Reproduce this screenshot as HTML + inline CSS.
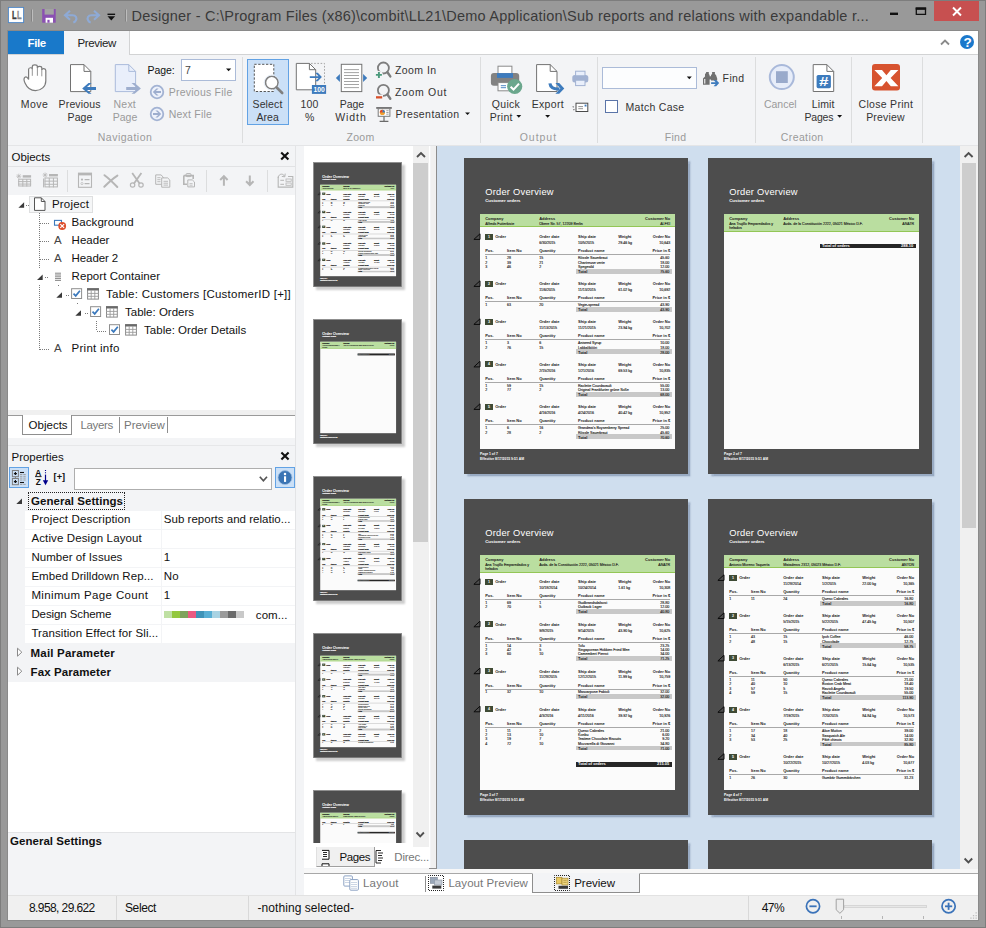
<!DOCTYPE html><html lang="en"><head><meta charset="utf-8"><title>Designer</title><style>
html,body{margin:0;padding:0}
body{width:986px;height:928px;overflow:hidden;position:relative;background:#999;font-family:"Liberation Sans",sans-serif}
body>div,body>svg,.t,#pv>div,#tv>div{position:absolute}
.t{white-space:pre;color:#1e1e1e;line-height:normal}
#pv>.pg{box-shadow:2.5px 2.5px 1.5px rgba(110,130,160,.55);overflow:visible}
.thb{width:89px;height:125px;overflow:hidden;background:#8f8f8f;box-shadow:2.5px 2.5px 2px rgba(0,0,0,.2)}
.thb .v,.thb .b{-webkit-text-stroke:.4px #222}
.thb .h1,.thb .h2,.thb .f{-webkit-text-stroke:.3px #fff}
svg{overflow:visible}

.pg{position:absolute;width:224px;height:316.6px;background:#4d4d4d;overflow:hidden}
.pg i,.pg b,.pg u,.pg s,.pg div,.pg svg{position:absolute;font-style:normal;text-decoration:none}
.pg i{white-space:pre;line-height:6px;height:6px;color:#1a1a1a}
.pg .b{font-weight:700;font-size:4px}
.pg .v{font-size:3.6px;-webkit-text-stroke:.12px #1a1a1a}
.pg .w{color:#fff}
.pg .f{font-weight:700;font-size:3.4px;color:#fff}
.pg .h1{font-size:9.3px;line-height:12px;height:12px;color:#fff;letter-spacing:.25px}
.pg .h2{font-weight:700;font-size:4.4px;color:#fff}
.pg .wp{left:16px;top:56.2px;width:195.2px;height:235px;background:#fbfbfb}
.pg .gb{left:16px;top:56.2px;width:195.2px;background:#badea0;border-bottom:1.3px solid #93c656}
.pg .bd{left:21.2px;width:7.6px;height:5.9px;background:#3f4b35;color:#fff;font-size:3.6px;line-height:6.4px;text-align:center}
.pg u{left:21.2px;width:185.2px;height:.6px;background:#a8a8a8}
.pg s{left:112px;width:96px;height:4.7px;background:#c8c8c8}
.pg s.k{background:#262626;height:4.4px}
.pg .tr{left:0;top:0}
.pg .tr path{fill:none;stroke:#0a0a0a;stroke-width:1}
</style></head><body><div style="left:0px;top:0px;width:986px;height:928px;background:#999;"></div><div style="left:0px;top:0px;width:986px;height:1px;background:#7d7d7d;"></div><div style="left:0px;top:0px;width:1px;height:928px;background:#7d7d7d;"></div><div style="left:985px;top:0px;width:1px;height:928px;background:#7d7d7d;"></div><div style="left:0px;top:927px;width:986px;height:1px;background:#7d7d7d;"></div><div style="left:7px;top:30px;width:1px;height:891px;background:#8a8a8a;"></div><div style="left:978px;top:30px;width:1px;height:891px;background:#8a8a8a;"></div><div style="left:7px;top:920px;width:972px;height:1px;background:#8a8a8a;"></div><div style="left:7px;top:30px;width:972px;height:1px;background:#8a8a8a;"></div><div style="left:934px;top:1px;width:45px;height:20px;background:#c75050;"></div><div style="left:8px;top:31px;width:970px;height:889px;background:#f3f4f6;"></div><div style="left:8px;top:31px;width:970px;height:23px;background:#fff;"></div><div style="left:8px;top:54px;width:970px;height:1px;background:#d2d3d4;"></div><div style="left:8px;top:31px;width:56px;height:23px;background:#1979ca;"></div><div style="left:64px;top:31px;width:66px;height:24px;background:#f3f4f6;border-right:1px solid #d2d3d4;box-sizing:border-box;"></div><div style="left:242px;top:57px;width:1px;height:86px;background:#dcddde;"></div><div style="left:480px;top:57px;width:1px;height:86px;background:#dcddde;"></div><div style="left:597px;top:57px;width:1px;height:86px;background:#dcddde;"></div><div style="left:755px;top:57px;width:1px;height:86px;background:#dcddde;"></div><div style="left:851px;top:57px;width:1px;height:86px;background:#dcddde;"></div><div style="left:922px;top:57px;width:1px;height:86px;background:#dcddde;"></div><div style="left:8px;top:145px;width:970px;height:1px;background:#e4e5e7;"></div><div style="left:181px;top:59px;width:55px;height:22px;background:#fff;border:1px solid #abbbd8;box-sizing:border-box;"></div><div style="left:247px;top:59px;width:42px;height:66px;background:#cbe0f7;border:1px solid #62a2e4;box-sizing:border-box;"></div><div style="left:602px;top:67px;width:95px;height:22px;background:#fcfdfe;border:1px solid #abbbd8;box-sizing:border-box;"></div><div style="left:605px;top:100px;width:13px;height:13px;background:#fff;border:1px solid #5a74a8;box-sizing:border-box;"></div><div style="left:295px;top:146px;width:1px;height:749px;background:#e3e4e6;"></div><div style="left:8px;top:166px;width:287px;height:1px;background:#e1e2e4;"></div><div style="left:8px;top:195px;width:287px;height:215px;background:#fff;"></div><div style="left:8px;top:410px;width:287px;height:5px;background:#f0f0f0;"></div><div style="left:8px;top:415px;width:287px;height:1px;background:#9a9a9a;"></div><div style="left:8px;top:416px;width:287px;height:22px;background:#fff;"></div><div style="left:22px;top:415px;width:50px;height:20px;background:#fff;border:1px solid #8e8e8e;border-top:none;box-sizing:border-box;"></div><div style="left:119px;top:417px;width:1px;height:16px;background:#8e8e8e;"></div><div style="left:167px;top:417px;width:1px;height:16px;background:#8e8e8e;"></div><div style="left:67px;top:170px;width:1px;height:22px;background:#dcddde;"></div><div style="left:206px;top:170px;width:1px;height:22px;background:#dcddde;"></div><div style="left:267px;top:170px;width:1px;height:22px;background:#dcddde;"></div><div style="left:29px;top:195.5px;width:63.5px;height:17px;background:#f5f6f7;border:1px solid #dedfe0;box-sizing:border-box;"></div><div style="left:8px;top:445px;width:287px;height:1px;background:#e6e7e9;"></div><div style="left:9px;top:467px;width:20px;height:21px;background:#cbe0f7;border:1px solid #62a2e4;box-sizing:border-box;"></div><div style="left:73.5px;top:468px;width:198px;height:21.5px;background:#fff;border:1px solid #aeaeae;box-sizing:border-box;"></div><div style="left:275px;top:467px;width:20px;height:21px;background:#cbe0f7;border:1px solid #62a2e4;box-sizing:border-box;"></div><div style="left:25px;top:511px;width:135.5px;height:18px;background:#fff;"></div><div style="left:161.5px;top:511px;width:133.5px;height:18px;background:#fff;"></div><div style="left:25px;top:530px;width:135.5px;height:18px;background:#fff;"></div><div style="left:161.5px;top:530px;width:133.5px;height:18px;background:#fff;"></div><div style="left:25px;top:549px;width:135.5px;height:18px;background:#fff;"></div><div style="left:161.5px;top:549px;width:133.5px;height:18px;background:#fff;"></div><div style="left:25px;top:568px;width:135.5px;height:18px;background:#fff;"></div><div style="left:161.5px;top:568px;width:133.5px;height:18px;background:#fff;"></div><div style="left:25px;top:586.6px;width:135.5px;height:18px;background:#fff;"></div><div style="left:161.5px;top:586.6px;width:133.5px;height:18px;background:#fff;"></div><div style="left:25px;top:605.6px;width:135.5px;height:18px;background:#fff;"></div><div style="left:161.5px;top:605.6px;width:133.5px;height:18px;background:#fff;"></div><div style="left:25px;top:624.6px;width:135.5px;height:18px;background:#fff;"></div><div style="left:161.5px;top:624.6px;width:133.5px;height:18px;background:#fff;"></div><div style="left:28px;top:492px;width:97px;height:17.5px;border:1px dotted #222;box-sizing:border-box;"></div><div style="left:163.5px;top:610.8px;width:8.03px;height:7.3px;background:#bfe0a3;"></div><div style="left:171.53px;top:610.8px;width:8.03px;height:7.3px;background:#93c83e;"></div><div style="left:179.56px;top:610.8px;width:8.03px;height:7.3px;background:#7fa35c;"></div><div style="left:187.59px;top:610.8px;width:8.03px;height:7.3px;background:#ea5a82;"></div><div style="left:195.62px;top:610.8px;width:8.03px;height:7.3px;background:#3f93b8;"></div><div style="left:203.65px;top:610.8px;width:8.03px;height:7.3px;background:#59afd4;"></div><div style="left:211.68px;top:610.8px;width:8.03px;height:7.3px;background:#a9d3e3;"></div><div style="left:219.70999999999998px;top:610.8px;width:8.03px;height:7.3px;background:#9b9b9b;"></div><div style="left:227.74px;top:610.8px;width:8.03px;height:7.3px;background:#6b6b6b;"></div><div style="left:235.76999999999998px;top:610.8px;width:8.03px;height:7.3px;background:#c9c9c9;"></div><div style="left:8px;top:682px;width:287px;height:150px;background:#fff;"></div><div style="left:8px;top:832px;width:287px;height:1px;background:#e3e4e6;"></div><div style="left:8px;top:895px;width:970px;height:25px;background:#f0f0f0;"></div><div style="left:8px;top:895px;width:970px;height:1px;background:#e2e2e2;"></div><div style="left:116px;top:896px;width:1px;height:24px;background:#d9d9d9;"></div><div style="left:248px;top:896px;width:1px;height:24px;background:#d9d9d9;"></div><div style="left:747.5px;top:896px;width:1px;height:24px;background:#d9d9d9;"></div><div style="left:304px;top:146px;width:126px;height:722px;background:#fff;"></div><div style="left:413px;top:146px;width:16px;height:701px;background:#f0f0f0;"></div><div style="left:413px;top:163px;width:15px;height:378.5px;background:#cdcdcd;"></div><div style="left:430.5px;top:146px;width:5px;height:722px;background:#f0f0f0;"></div><div style="left:436px;top:146px;width:1px;height:722px;background:#8c8c8c;"></div><div style="left:437px;top:146px;width:523px;height:722.5px;background:#cfdeee;"></div><div style="left:960px;top:146px;width:18px;height:722.5px;background:#f0f0f0;"></div><div style="left:961.5px;top:163.3px;width:14.2px;height:364.5px;background:#cdcdcd;"></div><div id="pv" style="left:437px;top:146px;width:523px;height:722.5px;overflow:hidden"><div class="pg" style="left:27px;top:11.699999999999989px"><i class="h1" style="left:21.2px;top:28.8px">Order Overview</i><i class="h2" style="left:21.2px;top:40.4px">Customer orders</i><div class="wp"></div><div class="gb" style="height:12.6px"></div><i class="b" style="left:21.2px;top:58.2px">Company</i><i class="b" style="left:75.2px;top:58.2px">Address</i><i class="b r" style="right:17.8px;top:58.2px">Customer No</i><i class="v" style="left:21.2px;top:62.9px">Alfreds Futterkiste</i><i class="v" style="left:75.2px;top:62.9px">Obere Str. 57, 12209 Berlin</i><i class="v r" style="right:17.8px;top:62.9px">ALFKI</i><b class="bd" style="left:21.2px;top:76.3px">1</b><i class="b" style="left:31.2px;top:76.6px">Order</i><i class="b" style="left:75.2px;top:76.6px">Order date</i><i class="b" style="left:114.0px;top:76.6px">Ship date</i><i class="b" style="left:154.2px;top:76.6px">Weight</i><i class="b r" style="right:17.8px;top:76.6px">Order No</i><i class="v" style="left:75.2px;top:82.5px">6/30/2015</i><i class="v" style="left:114.0px;top:82.5px">10/5/2015</i><i class="v" style="left:154.2px;top:82.5px">29.46 kg</i><i class="v r" style="right:17.8px;top:82.5px">10,643</i><i class="b" style="left:21.2px;top:90.6px">Pos.</i><i class="b" style="left:43.0px;top:90.6px">Item No</i><i class="b" style="left:75.2px;top:90.6px">Quantity</i><i class="b" style="left:114.0px;top:90.6px">Product name</i><i class="b r" style="right:17.8px;top:90.6px">Price in $</i><u style="top:96.7px"></u><i class="v" style="left:21.2px;top:97.5px">1</i><i class="v" style="left:43.0px;top:97.5px">28</i><i class="v" style="left:75.2px;top:97.5px">15</i><i class="v" style="left:114.0px;top:97.5px">Rössle Sauerkraut</i><i class="v r" style="right:18.8px;top:97.5px">45.60</i><i class="v" style="left:21.2px;top:102.0px">2</i><i class="v" style="left:43.0px;top:102.0px">39</i><i class="v" style="left:75.2px;top:102.0px">21</i><i class="v" style="left:114.0px;top:102.0px">Chartreuse verte</i><i class="v r" style="right:18.8px;top:102.0px">18.00</i><i class="v" style="left:21.2px;top:106.4px">3</i><i class="v" style="left:43.0px;top:106.4px">46</i><i class="v" style="left:75.2px;top:106.4px">2</i><i class="v" style="left:114.0px;top:106.4px">Spegesild</i><i class="v r" style="right:18.8px;top:106.4px">12.00</i><s style="top:111.2px"></s><i class="b" style="left:114.0px;top:111.4px">Total</i><i class="v r" style="right:18.8px;top:111.4px">75.60</i><b class="bd" style="left:21.2px;top:123.3px">2</b><i class="b" style="left:31.2px;top:123.6px">Order</i><i class="b" style="left:75.2px;top:123.6px">Order date</i><i class="b" style="left:114.0px;top:123.6px">Ship date</i><i class="b" style="left:154.2px;top:123.6px">Weight</i><i class="b r" style="right:17.8px;top:123.6px">Order No</i><i class="v" style="left:75.2px;top:129.5px">11/6/2015</i><i class="v" style="left:114.0px;top:129.5px">11/13/2015</i><i class="v" style="left:154.2px;top:129.5px">61.02 kg</i><i class="v r" style="right:17.8px;top:129.5px">10,692</i><i class="b" style="left:21.2px;top:137.6px">Pos.</i><i class="b" style="left:43.0px;top:137.6px">Item No</i><i class="b" style="left:75.2px;top:137.6px">Quantity</i><i class="b" style="left:114.0px;top:137.6px">Product name</i><i class="b r" style="right:17.8px;top:137.6px">Price in $</i><u style="top:143.7px"></u><i class="v" style="left:21.2px;top:144.5px">1</i><i class="v" style="left:43.0px;top:144.5px">63</i><i class="v" style="left:75.2px;top:144.5px">20</i><i class="v" style="left:114.0px;top:144.5px">Vegie-spread</i><i class="v r" style="right:18.8px;top:144.5px">43.90</i><s style="top:149.2px"></s><i class="b" style="left:114.0px;top:149.5px">Total</i><i class="v r" style="right:18.8px;top:149.5px">43.90</i><b class="bd" style="left:21.2px;top:161.3px">3</b><i class="b" style="left:31.2px;top:161.6px">Order</i><i class="b" style="left:75.2px;top:161.6px">Order date</i><i class="b" style="left:114.0px;top:161.6px">Ship date</i><i class="b" style="left:154.2px;top:161.6px">Weight</i><i class="b r" style="right:17.8px;top:161.6px">Order No</i><i class="v" style="left:75.2px;top:167.5px">11/13/2015</i><i class="v" style="left:114.0px;top:167.5px">11/21/2015</i><i class="v" style="left:154.2px;top:167.5px">23.94 kg</i><i class="v r" style="right:17.8px;top:167.5px">10,702</i><i class="b" style="left:21.2px;top:175.6px">Pos.</i><i class="b" style="left:43.0px;top:175.6px">Item No</i><i class="b" style="left:75.2px;top:175.6px">Quantity</i><i class="b" style="left:114.0px;top:175.6px">Product name</i><i class="b r" style="right:17.8px;top:175.6px">Price in $</i><u style="top:181.7px"></u><i class="v" style="left:21.2px;top:182.5px">1</i><i class="v" style="left:43.0px;top:182.5px">3</i><i class="v" style="left:75.2px;top:182.5px">6</i><i class="v" style="left:114.0px;top:182.5px">Aniseed Syrup</i><i class="v r" style="right:18.8px;top:182.5px">10.00</i><i class="v" style="left:21.2px;top:187.0px">2</i><i class="v" style="left:43.0px;top:187.0px">76</i><i class="v" style="left:75.2px;top:187.0px">15</i><i class="v" style="left:114.0px;top:187.0px">Lakkalikööri</i><i class="v r" style="right:18.8px;top:187.0px">18.00</i><s style="top:191.8px"></s><i class="b" style="left:114.0px;top:192.0px">Total</i><i class="v r" style="right:18.8px;top:192.0px">28.00</i><b class="bd" style="left:21.2px;top:203.8px">4</b><i class="b" style="left:31.2px;top:204.1px">Order</i><i class="b" style="left:75.2px;top:204.1px">Order date</i><i class="b" style="left:114.0px;top:204.1px">Ship date</i><i class="b" style="left:154.2px;top:204.1px">Weight</i><i class="b r" style="right:17.8px;top:204.1px">Order No</i><i class="v" style="left:75.2px;top:210.0px">2/15/2016</i><i class="v" style="left:114.0px;top:210.0px">1/21/2016</i><i class="v" style="left:154.2px;top:210.0px">69.53 kg</i><i class="v r" style="right:17.8px;top:210.0px">10,835</i><i class="b" style="left:21.2px;top:218.1px">Pos.</i><i class="b" style="left:43.0px;top:218.1px">Item No</i><i class="b" style="left:75.2px;top:218.1px">Quantity</i><i class="b" style="left:114.0px;top:218.1px">Product name</i><i class="b r" style="right:17.8px;top:218.1px">Price in $</i><u style="top:224.2px"></u><i class="v" style="left:21.2px;top:225.0px">1</i><i class="v" style="left:43.0px;top:225.0px">59</i><i class="v" style="left:75.2px;top:225.0px">15</i><i class="v" style="left:114.0px;top:225.0px">Raclette Courdavault</i><i class="v r" style="right:18.8px;top:225.0px">55.00</i><i class="v" style="left:21.2px;top:229.5px">2</i><i class="v" style="left:43.0px;top:229.5px">77</i><i class="v" style="left:75.2px;top:229.5px">2</i><i class="v" style="left:114.0px;top:229.5px">Original Frankfurter grüne Soße</i><i class="v r" style="right:18.8px;top:229.5px">13.00</i><s style="top:234.2px"></s><i class="b" style="left:114.0px;top:234.5px">Total</i><i class="v r" style="right:18.8px;top:234.5px">68.00</i><b class="bd" style="left:21.2px;top:246.3px">5</b><i class="b" style="left:31.2px;top:246.6px">Order</i><i class="b" style="left:75.2px;top:246.6px">Order date</i><i class="b" style="left:114.0px;top:246.6px">Ship date</i><i class="b" style="left:154.2px;top:246.6px">Weight</i><i class="b r" style="right:17.8px;top:246.6px">Order No</i><i class="v" style="left:75.2px;top:252.5px">4/16/2016</i><i class="v" style="left:114.0px;top:252.5px">4/24/2016</i><i class="v" style="left:154.2px;top:252.5px">40.42 kg</i><i class="v r" style="right:17.8px;top:252.5px">10,952</i><i class="b" style="left:21.2px;top:260.6px">Pos.</i><i class="b" style="left:43.0px;top:260.6px">Item No</i><i class="b" style="left:75.2px;top:260.6px">Quantity</i><i class="b" style="left:114.0px;top:260.6px">Product name</i><i class="b r" style="right:17.8px;top:260.6px">Price in $</i><u style="top:266.7px"></u><i class="v" style="left:21.2px;top:267.5px">1</i><i class="v" style="left:43.0px;top:267.5px">6</i><i class="v" style="left:75.2px;top:267.5px">16</i><i class="v" style="left:114.0px;top:267.5px">Grandma's Boysenberry Spread</i><i class="v r" style="right:18.8px;top:267.5px">25.00</i><i class="v" style="left:21.2px;top:271.9px">2</i><i class="v" style="left:43.0px;top:271.9px">28</i><i class="v" style="left:75.2px;top:271.9px">2</i><i class="v" style="left:114.0px;top:271.9px">Rössle Sauerkraut</i><i class="v r" style="right:18.8px;top:271.9px">45.60</i><s style="top:276.8px"></s><i class="b" style="left:114.0px;top:276.9px">Total</i><i class="v r" style="right:18.8px;top:276.9px">70.60</i><i class="f" style="left:16.0px;top:293.5px">Page 1 of 7</i><i class="f" style="left:16.0px;top:298.6px">Effective 8/17/2015 9:51 AM</i><svg class="tr" width="224" height="317" viewBox="0 0 224 317"><path d="M9.9 81.4h6.1v-5.6zM9.9 128.4h6.1v-5.6zM9.9 166.4h6.1v-5.6zM9.9 208.9h6.1v-5.6zM9.9 251.4h6.1v-5.6z"/></svg></div><div class="pg" style="left:271px;top:11.699999999999989px"><i class="h1" style="left:21.2px;top:28.8px">Order Overview</i><i class="h2" style="left:21.2px;top:40.4px">Customer orders</i><div class="wp"></div><div class="gb" style="height:17.2px"></div><i class="b" style="left:21.2px;top:58.2px">Company</i><i class="b" style="left:75.2px;top:58.2px">Address</i><i class="b r" style="right:17.8px;top:58.2px">Customer No</i><i class="v" style="left:21.2px;top:62.9px">Ana Trujillo Emparedados y</i><i class="v" style="left:21.2px;top:67.4px">helados</i><i class="v" style="left:75.2px;top:62.9px">Avda. de la Constitución 2222, 05021 México D.F.</i><i class="v r" style="right:17.8px;top:62.9px">ANATR</i><s class="k" style="top:86.2px"></s><i class="b w" style="left:114.0px;top:85.3px">Total of orders</i><i class="b w r" style="right:18.8px;top:85.3px">288.10</i><i class="f" style="left:16.0px;top:293.5px">Page 2 of 7</i><i class="f" style="left:16.0px;top:298.6px">Effective 8/17/2015 9:51 AM</i></div><div class="pg" style="left:27px;top:352.7px"><i class="h1" style="left:21.2px;top:28.8px">Order Overview</i><i class="h2" style="left:21.2px;top:40.4px">Customer orders</i><div class="wp"></div><div class="gb" style="height:17.2px"></div><i class="b" style="left:21.2px;top:58.2px">Company</i><i class="b" style="left:75.2px;top:58.2px">Address</i><i class="b r" style="right:17.8px;top:58.2px">Customer No</i><i class="v" style="left:21.2px;top:62.9px">Ana Trujillo Emparedados y</i><i class="v" style="left:21.2px;top:67.4px">helados</i><i class="v" style="left:75.2px;top:62.9px">Avda. de la Constitución 2222, 05021 México D.F.</i><i class="v r" style="right:17.8px;top:62.9px">ANATR</i><b class="bd" style="left:21.2px;top:80.2px">1</b><i class="b" style="left:31.2px;top:80.5px">Order</i><i class="b" style="left:75.2px;top:80.5px">Order date</i><i class="b" style="left:114.0px;top:80.5px">Ship date</i><i class="b" style="left:154.2px;top:80.5px">Weight</i><i class="b r" style="right:17.8px;top:80.5px">Order No</i><i class="v" style="left:75.2px;top:86.4px">10/18/2014</i><i class="v" style="left:114.0px;top:86.4px">10/24/2014</i><i class="v" style="left:154.2px;top:86.4px">1.61 kg</i><i class="v r" style="right:17.8px;top:86.4px">10,308</i><i class="b" style="left:21.2px;top:94.5px">Pos.</i><i class="b" style="left:43.0px;top:94.5px">Item No</i><i class="b" style="left:75.2px;top:94.5px">Quantity</i><i class="b" style="left:114.0px;top:94.5px">Product name</i><i class="b r" style="right:17.8px;top:94.5px">Price in $</i><u style="top:100.6px"></u><i class="v" style="left:21.2px;top:101.4px">1</i><i class="v" style="left:43.0px;top:101.4px">69</i><i class="v" style="left:75.2px;top:101.4px">1</i><i class="v" style="left:114.0px;top:101.4px">Gudbrandsdalsost</i><i class="v r" style="right:18.8px;top:101.4px">28.80</i><i class="v" style="left:21.2px;top:105.8px">2</i><i class="v" style="left:43.0px;top:105.8px">70</i><i class="v" style="left:75.2px;top:105.8px">5</i><i class="v" style="left:114.0px;top:105.8px">Outback Lager</i><i class="v r" style="right:18.8px;top:105.8px">12.00</i><s style="top:110.6px"></s><i class="b" style="left:114.0px;top:110.8px">Total</i><i class="v r" style="right:18.8px;top:110.8px">40.80</i><b class="bd" style="left:21.2px;top:122.7px">2</b><i class="b" style="left:31.2px;top:123.0px">Order</i><i class="b" style="left:75.2px;top:123.0px">Order date</i><i class="b" style="left:114.0px;top:123.0px">Ship date</i><i class="b" style="left:154.2px;top:123.0px">Weight</i><i class="b r" style="right:17.8px;top:123.0px">Order No</i><i class="v" style="left:75.2px;top:128.9px">9/8/2015</i><i class="v" style="left:114.0px;top:128.9px">9/14/2015</i><i class="v" style="left:154.2px;top:128.9px">43.90 kg</i><i class="v r" style="right:17.8px;top:128.9px">10,625</i><i class="b" style="left:21.2px;top:137.0px">Pos.</i><i class="b" style="left:43.0px;top:137.0px">Item No</i><i class="b" style="left:75.2px;top:137.0px">Quantity</i><i class="b" style="left:114.0px;top:137.0px">Product name</i><i class="b r" style="right:17.8px;top:137.0px">Price in $</i><u style="top:143.1px"></u><i class="v" style="left:21.2px;top:143.9px">1</i><i class="v" style="left:43.0px;top:143.9px">14</i><i class="v" style="left:75.2px;top:143.9px">3</i><i class="v" style="left:114.0px;top:143.9px">Tofu</i><i class="v r" style="right:18.8px;top:143.9px">23.25</i><i class="v" style="left:21.2px;top:148.3px">2</i><i class="v" style="left:43.0px;top:148.3px">42</i><i class="v" style="left:75.2px;top:148.3px">5</i><i class="v" style="left:114.0px;top:148.3px">Singaporean Hokkien Fried Mee</i><i class="v r" style="right:18.8px;top:148.3px">14.00</i><i class="v" style="left:21.2px;top:152.8px">3</i><i class="v" style="left:43.0px;top:152.8px">60</i><i class="v" style="left:75.2px;top:152.8px">10</i><i class="v" style="left:114.0px;top:152.8px">Camembert Pierrot</i><i class="v r" style="right:18.8px;top:152.8px">34.00</i><s style="top:157.6px"></s><i class="b" style="left:114.0px;top:157.8px">Total</i><i class="v r" style="right:18.8px;top:157.8px">71.25</i><b class="bd" style="left:21.2px;top:169.6px">3</b><i class="b" style="left:31.2px;top:169.9px">Order</i><i class="b" style="left:75.2px;top:169.9px">Order date</i><i class="b" style="left:114.0px;top:169.9px">Ship date</i><i class="b" style="left:154.2px;top:169.9px">Weight</i><i class="b r" style="right:17.8px;top:169.9px">Order No</i><i class="v" style="left:75.2px;top:175.8px">11/28/2015</i><i class="v" style="left:114.0px;top:175.8px">12/12/2015</i><i class="v" style="left:154.2px;top:175.8px">11.99 kg</i><i class="v r" style="right:17.8px;top:175.8px">10,759</i><i class="b" style="left:21.2px;top:183.9px">Pos.</i><i class="b" style="left:43.0px;top:183.9px">Item No</i><i class="b" style="left:75.2px;top:183.9px">Quantity</i><i class="b" style="left:114.0px;top:183.9px">Product name</i><i class="b r" style="right:17.8px;top:183.9px">Price in $</i><u style="top:190.0px"></u><i class="v" style="left:21.2px;top:190.8px">1</i><i class="v" style="left:43.0px;top:190.8px">32</i><i class="v" style="left:75.2px;top:190.8px">10</i><i class="v" style="left:114.0px;top:190.8px">Mascarpone Fabioli</i><i class="v r" style="right:18.8px;top:190.8px">32.00</i><s style="top:195.6px"></s><i class="b" style="left:114.0px;top:195.8px">Total</i><i class="v r" style="right:18.8px;top:195.8px">32.00</i><b class="bd" style="left:21.2px;top:207.7px">4</b><i class="b" style="left:31.2px;top:208.0px">Order</i><i class="b" style="left:75.2px;top:208.0px">Order date</i><i class="b" style="left:114.0px;top:208.0px">Ship date</i><i class="b" style="left:154.2px;top:208.0px">Weight</i><i class="b r" style="right:17.8px;top:208.0px">Order No</i><i class="v" style="left:75.2px;top:213.9px">4/3/2016</i><i class="v" style="left:114.0px;top:213.9px">4/11/2016</i><i class="v" style="left:154.2px;top:213.9px">39.92 kg</i><i class="v r" style="right:17.8px;top:213.9px">10,926</i><i class="b" style="left:21.2px;top:222.0px">Pos.</i><i class="b" style="left:43.0px;top:222.0px">Item No</i><i class="b" style="left:75.2px;top:222.0px">Quantity</i><i class="b" style="left:114.0px;top:222.0px">Product name</i><i class="b r" style="right:17.8px;top:222.0px">Price in $</i><u style="top:228.1px"></u><i class="v" style="left:21.2px;top:228.9px">1</i><i class="v" style="left:43.0px;top:228.9px">11</i><i class="v" style="left:75.2px;top:228.9px">2</i><i class="v" style="left:114.0px;top:228.9px">Queso Cabrales</i><i class="v r" style="right:18.8px;top:228.9px">21.00</i><i class="v" style="left:21.2px;top:233.3px">2</i><i class="v" style="left:43.0px;top:233.3px">13</i><i class="v" style="left:75.2px;top:233.3px">10</i><i class="v" style="left:114.0px;top:233.3px">Konbu</i><i class="v r" style="right:18.8px;top:233.3px">6.00</i><i class="v" style="left:21.2px;top:237.8px">3</i><i class="v" style="left:43.0px;top:237.8px">19</i><i class="v" style="left:75.2px;top:237.8px">7</i><i class="v" style="left:114.0px;top:237.8px">Teatime Chocolate Biscuits</i><i class="v r" style="right:18.8px;top:237.8px">9.20</i><i class="v" style="left:21.2px;top:242.2px">4</i><i class="v" style="left:43.0px;top:242.2px">72</i><i class="v" style="left:75.2px;top:242.2px">10</i><i class="v" style="left:114.0px;top:242.2px">Mozzarella di Giovanni</i><i class="v r" style="right:18.8px;top:242.2px">34.80</i><s style="top:247.0px"></s><i class="b" style="left:114.0px;top:247.2px">Total</i><i class="v r" style="right:18.8px;top:247.2px">71.00</i><s class="k" style="top:263.6px"></s><i class="b w" style="left:114.0px;top:262.7px">Total of orders</i><i class="b w r" style="right:18.8px;top:262.7px">215.05</i><i class="f" style="left:16.0px;top:293.5px">Page 3 of 7</i><i class="f" style="left:16.0px;top:298.6px">Effective 8/17/2015 9:51 AM</i><svg class="tr" width="224" height="317" viewBox="0 0 224 317"><path d="M9.9 85.3h6.1v-5.6zM9.9 127.8h6.1v-5.6zM9.9 174.7h6.1v-5.6zM9.9 212.8h6.1v-5.6z"/></svg></div><div class="pg" style="left:271px;top:352.7px"><i class="h1" style="left:21.2px;top:28.8px">Order Overview</i><i class="h2" style="left:21.2px;top:40.4px">Customer orders</i><div class="wp"></div><div class="gb" style="height:12.6px"></div><i class="b" style="left:21.2px;top:58.2px">Company</i><i class="b" style="left:75.2px;top:58.2px">Address</i><i class="b r" style="right:17.8px;top:58.2px">Customer No</i><i class="v" style="left:21.2px;top:62.9px">Antonio Moreno Taquería</i><i class="v" style="left:75.2px;top:62.9px">Mataderos 2312, 05023 México D.F.</i><i class="v r" style="right:17.8px;top:62.9px">ANTON</i><b class="bd" style="left:21.2px;top:76.3px">1</b><i class="b" style="left:31.2px;top:76.6px">Order</i><i class="b" style="left:75.2px;top:76.6px">Order date</i><i class="b" style="left:114.0px;top:76.6px">Ship date</i><i class="b" style="left:154.2px;top:76.6px">Weight</i><i class="b r" style="right:17.8px;top:76.6px">Order No</i><i class="v" style="left:75.2px;top:82.5px">11/28/2014</i><i class="v" style="left:114.0px;top:82.5px">1/2/2015</i><i class="v" style="left:154.2px;top:82.5px">22.00 kg</i><i class="v r" style="right:17.8px;top:82.5px">10,365</i><i class="b" style="left:21.2px;top:90.6px">Pos.</i><i class="b" style="left:43.0px;top:90.6px">Item No</i><i class="b" style="left:75.2px;top:90.6px">Quantity</i><i class="b" style="left:114.0px;top:90.6px">Product name</i><i class="b r" style="right:17.8px;top:90.6px">Price in $</i><u style="top:96.7px"></u><i class="v" style="left:21.2px;top:97.5px">1</i><i class="v" style="left:43.0px;top:97.5px">11</i><i class="v" style="left:75.2px;top:97.5px">24</i><i class="v" style="left:114.0px;top:97.5px">Queso Cabrales</i><i class="v r" style="right:18.8px;top:97.5px">16.80</i><s style="top:102.3px"></s><i class="b" style="left:114.0px;top:102.5px">Total</i><i class="v r" style="right:18.8px;top:102.5px">16.80</i><b class="bd" style="left:21.2px;top:114.4px">2</b><i class="b" style="left:31.2px;top:114.7px">Order</i><i class="b" style="left:75.2px;top:114.7px">Order date</i><i class="b" style="left:114.0px;top:114.7px">Ship date</i><i class="b" style="left:154.2px;top:114.7px">Weight</i><i class="b r" style="right:17.8px;top:114.7px">Order No</i><i class="v" style="left:75.2px;top:120.6px">5/15/2015</i><i class="v" style="left:114.0px;top:120.6px">5/22/2015</i><i class="v" style="left:154.2px;top:120.6px">47.45 kg</i><i class="v r" style="right:17.8px;top:120.6px">10,507</i><i class="b" style="left:21.2px;top:128.7px">Pos.</i><i class="b" style="left:43.0px;top:128.7px">Item No</i><i class="b" style="left:75.2px;top:128.7px">Quantity</i><i class="b" style="left:114.0px;top:128.7px">Product name</i><i class="b r" style="right:17.8px;top:128.7px">Price in $</i><u style="top:134.8px"></u><i class="v" style="left:21.2px;top:135.6px">1</i><i class="v" style="left:43.0px;top:135.6px">43</i><i class="v" style="left:75.2px;top:135.6px">15</i><i class="v" style="left:114.0px;top:135.6px">Ipoh Coffee</i><i class="v r" style="right:18.8px;top:135.6px">46.00</i><i class="v" style="left:21.2px;top:140.0px">2</i><i class="v" style="left:43.0px;top:140.0px">48</i><i class="v" style="left:75.2px;top:140.0px">15</i><i class="v" style="left:114.0px;top:140.0px">Chocolade</i><i class="v r" style="right:18.8px;top:140.0px">12.75</i><s style="top:144.8px"></s><i class="b" style="left:114.0px;top:145.0px">Total</i><i class="v r" style="right:18.8px;top:145.0px">58.75</i><b class="bd" style="left:21.2px;top:156.8px">3</b><i class="b" style="left:31.2px;top:157.2px">Order</i><i class="b" style="left:75.2px;top:157.2px">Order date</i><i class="b" style="left:114.0px;top:157.2px">Ship date</i><i class="b" style="left:154.2px;top:157.2px">Weight</i><i class="b r" style="right:17.8px;top:157.2px">Order No</i><i class="v" style="left:75.2px;top:163.1px">6/13/2015</i><i class="v" style="left:114.0px;top:163.1px">6/21/2015</i><i class="v" style="left:154.2px;top:163.1px">15.64 kg</i><i class="v r" style="right:17.8px;top:163.1px">10,535</i><i class="b" style="left:21.2px;top:171.2px">Pos.</i><i class="b" style="left:43.0px;top:171.2px">Item No</i><i class="b" style="left:75.2px;top:171.2px">Quantity</i><i class="b" style="left:114.0px;top:171.2px">Product name</i><i class="b r" style="right:17.8px;top:171.2px">Price in $</i><u style="top:177.2px"></u><i class="v" style="left:21.2px;top:178.1px">1</i><i class="v" style="left:43.0px;top:178.1px">11</i><i class="v" style="left:75.2px;top:178.1px">50</i><i class="v" style="left:114.0px;top:178.1px">Queso Cabrales</i><i class="v r" style="right:18.8px;top:178.1px">21.00</i><i class="v" style="left:21.2px;top:182.5px">2</i><i class="v" style="left:43.0px;top:182.5px">40</i><i class="v" style="left:75.2px;top:182.5px">10</i><i class="v" style="left:114.0px;top:182.5px">Boston Crab Meat</i><i class="v r" style="right:18.8px;top:182.5px">18.40</i><i class="v" style="left:21.2px;top:186.9px">3</i><i class="v" style="left:43.0px;top:186.9px">57</i><i class="v" style="left:75.2px;top:186.9px">5</i><i class="v" style="left:114.0px;top:186.9px">Ravioli Angelo</i><i class="v r" style="right:18.8px;top:186.9px">19.50</i><i class="v" style="left:21.2px;top:191.4px">4</i><i class="v" style="left:43.0px;top:191.4px">59</i><i class="v" style="left:75.2px;top:191.4px">15</i><i class="v" style="left:114.0px;top:191.4px">Raclette Courdavault</i><i class="v r" style="right:18.8px;top:191.4px">55.00</i><s style="top:196.2px"></s><i class="b" style="left:114.0px;top:196.4px">Total</i><i class="v r" style="right:18.8px;top:196.4px">113.90</i><b class="bd" style="left:21.2px;top:208.2px">4</b><i class="b" style="left:31.2px;top:208.5px">Order</i><i class="b" style="left:75.2px;top:208.5px">Order date</i><i class="b" style="left:114.0px;top:208.5px">Ship date</i><i class="b" style="left:154.2px;top:208.5px">Weight</i><i class="b r" style="right:17.8px;top:208.5px">Order No</i><i class="v" style="left:75.2px;top:214.4px">7/19/2015</i><i class="v" style="left:114.0px;top:214.4px">7/20/2015</i><i class="v" style="left:154.2px;top:214.4px">84.84 kg</i><i class="v r" style="right:17.8px;top:214.4px">10,573</i><i class="b" style="left:21.2px;top:222.5px">Pos.</i><i class="b" style="left:43.0px;top:222.5px">Item No</i><i class="b" style="left:75.2px;top:222.5px">Quantity</i><i class="b" style="left:114.0px;top:222.5px">Product name</i><i class="b r" style="right:17.8px;top:222.5px">Price in $</i><u style="top:228.6px"></u><i class="v" style="left:21.2px;top:229.4px">1</i><i class="v" style="left:43.0px;top:229.4px">17</i><i class="v" style="left:75.2px;top:229.4px">18</i><i class="v" style="left:114.0px;top:229.4px">Alice Mutton</i><i class="v r" style="right:18.8px;top:229.4px">39.00</i><i class="v" style="left:21.2px;top:233.9px">2</i><i class="v" style="left:43.0px;top:233.9px">34</i><i class="v" style="left:75.2px;top:233.9px">40</i><i class="v" style="left:114.0px;top:233.9px">Sasquatch Ale</i><i class="v r" style="right:18.8px;top:233.9px">14.00</i><i class="v" style="left:21.2px;top:238.3px">3</i><i class="v" style="left:43.0px;top:238.3px">53</i><i class="v" style="left:75.2px;top:238.3px">25</i><i class="v" style="left:114.0px;top:238.3px">Pâté chinois</i><i class="v r" style="right:18.8px;top:238.3px">32.80</i><s style="top:243.1px"></s><i class="b" style="left:114.0px;top:243.3px">Total</i><i class="v r" style="right:18.8px;top:243.3px">85.80</i><b class="bd" style="left:21.2px;top:255.2px">5</b><i class="b" style="left:31.2px;top:255.5px">Order</i><i class="b" style="left:75.2px;top:255.5px">Order date</i><i class="b" style="left:114.0px;top:255.5px">Ship date</i><i class="b" style="left:154.2px;top:255.5px">Weight</i><i class="b r" style="right:17.8px;top:255.5px">Order No</i><i class="v" style="left:75.2px;top:261.4px">10/22/2015</i><i class="v" style="left:114.0px;top:261.4px">10/27/2015</i><i class="v" style="left:154.2px;top:261.4px">4.03 kg</i><i class="v r" style="right:17.8px;top:261.4px">10,677</i><i class="b" style="left:21.2px;top:269.5px">Pos.</i><i class="b" style="left:43.0px;top:269.5px">Item No</i><i class="b" style="left:75.2px;top:269.5px">Quantity</i><i class="b" style="left:114.0px;top:269.5px">Product name</i><i class="b r" style="right:17.8px;top:269.5px">Price in $</i><u style="top:275.6px"></u><i class="v" style="left:21.2px;top:276.4px">1</i><i class="v" style="left:43.0px;top:276.4px">26</i><i class="v" style="left:75.2px;top:276.4px">30</i><i class="v" style="left:114.0px;top:276.4px">Gumbär Gummibärchen</i><i class="v r" style="right:18.8px;top:276.4px">31.23</i><i class="f" style="left:16.0px;top:293.5px">Page 4 of 7</i><i class="f" style="left:16.0px;top:298.6px">Effective 8/17/2015 9:51 AM</i><svg class="tr" width="224" height="317" viewBox="0 0 224 317"><path d="M9.9 81.4h6.1v-5.6zM9.9 119.5h6.1v-5.6zM9.9 161.9h6.1v-5.6zM9.9 213.3h6.1v-5.6zM9.9 260.3h6.1v-5.6z"/></svg></div><div class="pg" style="left:27px;top:693.7px"><i class="h1" style="left:21.2px;top:28.8px">Order Overview</i><i class="h2" style="left:21.2px;top:40.4px">Customer orders</i><div class="wp"></div><div class="gb" style="height:12.6px"></div><i class="b" style="left:21.2px;top:58.2px">Company</i><i class="b" style="left:75.2px;top:58.2px">Address</i><i class="b r" style="right:17.8px;top:58.2px">Customer No</i><i class="v" style="left:21.2px;top:62.9px">Antonio Moreno Taquería</i><i class="v" style="left:75.2px;top:62.9px">Mataderos 2312, 05023 México D.F.</i><i class="v r" style="right:17.8px;top:62.9px">ANTON</i><i class="b" style="left:21.2px;top:76.6px">Pos.</i><i class="b" style="left:43.0px;top:76.6px">Item No</i><i class="b" style="left:75.2px;top:76.6px">Quantity</i><i class="b" style="left:114.0px;top:76.6px">Product name</i><i class="b r" style="right:17.8px;top:76.6px">Price in $</i><u style="top:82.7px"></u><i class="v" style="left:21.2px;top:83.5px">2</i><i class="v" style="left:43.0px;top:83.5px">33</i><i class="v" style="left:75.2px;top:83.5px">8</i><i class="v" style="left:114.0px;top:83.5px">Geitost</i><i class="v r" style="right:18.8px;top:83.5px">2.50</i><s style="top:88.3px"></s><i class="b" style="left:114.0px;top:88.5px">Total</i><i class="v r" style="right:18.8px;top:88.5px">33.73</i><s class="k" style="top:104.9px"></s><i class="b w" style="left:114.0px;top:104.0px">Total of orders</i><i class="b w r" style="right:18.8px;top:104.0px">306.28</i><i class="f" style="left:16.0px;top:293.5px">Page 5 of 7</i><i class="f" style="left:16.0px;top:298.6px">Effective 8/17/2015 9:51 AM</i></div><div class="pg" style="left:271px;top:693.7px"><i class="h1" style="left:21.2px;top:28.8px">Order Overview</i><i class="h2" style="left:21.2px;top:40.4px">Customer orders</i><div class="wp"></div><div class="gb" style="height:12.6px"></div><i class="b" style="left:21.2px;top:58.2px">Company</i><i class="b" style="left:75.2px;top:58.2px">Address</i><i class="b r" style="right:17.8px;top:58.2px">Customer No</i><i class="v" style="left:21.2px;top:62.9px">Antonio Moreno Taquería</i><i class="v" style="left:75.2px;top:62.9px">Mataderos 2312, 05023 México D.F.</i><i class="v r" style="right:17.8px;top:62.9px">ANTON</i><i class="f" style="left:16.0px;top:293.5px">Page 6 of 7</i><i class="f" style="left:16.0px;top:298.6px">Effective 8/17/2015 9:51 AM</i></div></div><div id="tv" style="left:304px;top:146px;width:109px;height:697px;overflow:hidden"><div class="thb" style="left:9px;top:16px"><div class="pg" style="left:1px;top:1px;transform:scale(.389);transform-origin:0 0"><i class="h1" style="left:21.2px;top:28.8px">Order Overview</i><i class="h2" style="left:21.2px;top:40.4px">Customer orders</i><div class="wp"></div><div class="gb" style="height:12.6px"></div><i class="b" style="left:21.2px;top:58.2px">Company</i><i class="b" style="left:75.2px;top:58.2px">Address</i><i class="b r" style="right:17.8px;top:58.2px">Customer No</i><i class="v" style="left:21.2px;top:62.9px">Alfreds Futterkiste</i><i class="v" style="left:75.2px;top:62.9px">Obere Str. 57, 12209 Berlin</i><i class="v r" style="right:17.8px;top:62.9px">ALFKI</i><b class="bd" style="left:21.2px;top:76.3px">1</b><i class="b" style="left:31.2px;top:76.6px">Order</i><i class="b" style="left:75.2px;top:76.6px">Order date</i><i class="b" style="left:114.0px;top:76.6px">Ship date</i><i class="b" style="left:154.2px;top:76.6px">Weight</i><i class="b r" style="right:17.8px;top:76.6px">Order No</i><i class="v" style="left:75.2px;top:82.5px">6/30/2015</i><i class="v" style="left:114.0px;top:82.5px">10/5/2015</i><i class="v" style="left:154.2px;top:82.5px">29.46 kg</i><i class="v r" style="right:17.8px;top:82.5px">10,643</i><i class="b" style="left:21.2px;top:90.6px">Pos.</i><i class="b" style="left:43.0px;top:90.6px">Item No</i><i class="b" style="left:75.2px;top:90.6px">Quantity</i><i class="b" style="left:114.0px;top:90.6px">Product name</i><i class="b r" style="right:17.8px;top:90.6px">Price in $</i><u style="top:96.7px"></u><i class="v" style="left:21.2px;top:97.5px">1</i><i class="v" style="left:43.0px;top:97.5px">28</i><i class="v" style="left:75.2px;top:97.5px">15</i><i class="v" style="left:114.0px;top:97.5px">Rössle Sauerkraut</i><i class="v r" style="right:18.8px;top:97.5px">45.60</i><i class="v" style="left:21.2px;top:102.0px">2</i><i class="v" style="left:43.0px;top:102.0px">39</i><i class="v" style="left:75.2px;top:102.0px">21</i><i class="v" style="left:114.0px;top:102.0px">Chartreuse verte</i><i class="v r" style="right:18.8px;top:102.0px">18.00</i><i class="v" style="left:21.2px;top:106.4px">3</i><i class="v" style="left:43.0px;top:106.4px">46</i><i class="v" style="left:75.2px;top:106.4px">2</i><i class="v" style="left:114.0px;top:106.4px">Spegesild</i><i class="v r" style="right:18.8px;top:106.4px">12.00</i><s style="top:111.2px"></s><i class="b" style="left:114.0px;top:111.4px">Total</i><i class="v r" style="right:18.8px;top:111.4px">75.60</i><b class="bd" style="left:21.2px;top:123.3px">2</b><i class="b" style="left:31.2px;top:123.6px">Order</i><i class="b" style="left:75.2px;top:123.6px">Order date</i><i class="b" style="left:114.0px;top:123.6px">Ship date</i><i class="b" style="left:154.2px;top:123.6px">Weight</i><i class="b r" style="right:17.8px;top:123.6px">Order No</i><i class="v" style="left:75.2px;top:129.5px">11/6/2015</i><i class="v" style="left:114.0px;top:129.5px">11/13/2015</i><i class="v" style="left:154.2px;top:129.5px">61.02 kg</i><i class="v r" style="right:17.8px;top:129.5px">10,692</i><i class="b" style="left:21.2px;top:137.6px">Pos.</i><i class="b" style="left:43.0px;top:137.6px">Item No</i><i class="b" style="left:75.2px;top:137.6px">Quantity</i><i class="b" style="left:114.0px;top:137.6px">Product name</i><i class="b r" style="right:17.8px;top:137.6px">Price in $</i><u style="top:143.7px"></u><i class="v" style="left:21.2px;top:144.5px">1</i><i class="v" style="left:43.0px;top:144.5px">63</i><i class="v" style="left:75.2px;top:144.5px">20</i><i class="v" style="left:114.0px;top:144.5px">Vegie-spread</i><i class="v r" style="right:18.8px;top:144.5px">43.90</i><s style="top:149.2px"></s><i class="b" style="left:114.0px;top:149.5px">Total</i><i class="v r" style="right:18.8px;top:149.5px">43.90</i><b class="bd" style="left:21.2px;top:161.3px">3</b><i class="b" style="left:31.2px;top:161.6px">Order</i><i class="b" style="left:75.2px;top:161.6px">Order date</i><i class="b" style="left:114.0px;top:161.6px">Ship date</i><i class="b" style="left:154.2px;top:161.6px">Weight</i><i class="b r" style="right:17.8px;top:161.6px">Order No</i><i class="v" style="left:75.2px;top:167.5px">11/13/2015</i><i class="v" style="left:114.0px;top:167.5px">11/21/2015</i><i class="v" style="left:154.2px;top:167.5px">23.94 kg</i><i class="v r" style="right:17.8px;top:167.5px">10,702</i><i class="b" style="left:21.2px;top:175.6px">Pos.</i><i class="b" style="left:43.0px;top:175.6px">Item No</i><i class="b" style="left:75.2px;top:175.6px">Quantity</i><i class="b" style="left:114.0px;top:175.6px">Product name</i><i class="b r" style="right:17.8px;top:175.6px">Price in $</i><u style="top:181.7px"></u><i class="v" style="left:21.2px;top:182.5px">1</i><i class="v" style="left:43.0px;top:182.5px">3</i><i class="v" style="left:75.2px;top:182.5px">6</i><i class="v" style="left:114.0px;top:182.5px">Aniseed Syrup</i><i class="v r" style="right:18.8px;top:182.5px">10.00</i><i class="v" style="left:21.2px;top:187.0px">2</i><i class="v" style="left:43.0px;top:187.0px">76</i><i class="v" style="left:75.2px;top:187.0px">15</i><i class="v" style="left:114.0px;top:187.0px">Lakkalikööri</i><i class="v r" style="right:18.8px;top:187.0px">18.00</i><s style="top:191.8px"></s><i class="b" style="left:114.0px;top:192.0px">Total</i><i class="v r" style="right:18.8px;top:192.0px">28.00</i><b class="bd" style="left:21.2px;top:203.8px">4</b><i class="b" style="left:31.2px;top:204.1px">Order</i><i class="b" style="left:75.2px;top:204.1px">Order date</i><i class="b" style="left:114.0px;top:204.1px">Ship date</i><i class="b" style="left:154.2px;top:204.1px">Weight</i><i class="b r" style="right:17.8px;top:204.1px">Order No</i><i class="v" style="left:75.2px;top:210.0px">2/15/2016</i><i class="v" style="left:114.0px;top:210.0px">1/21/2016</i><i class="v" style="left:154.2px;top:210.0px">69.53 kg</i><i class="v r" style="right:17.8px;top:210.0px">10,835</i><i class="b" style="left:21.2px;top:218.1px">Pos.</i><i class="b" style="left:43.0px;top:218.1px">Item No</i><i class="b" style="left:75.2px;top:218.1px">Quantity</i><i class="b" style="left:114.0px;top:218.1px">Product name</i><i class="b r" style="right:17.8px;top:218.1px">Price in $</i><u style="top:224.2px"></u><i class="v" style="left:21.2px;top:225.0px">1</i><i class="v" style="left:43.0px;top:225.0px">59</i><i class="v" style="left:75.2px;top:225.0px">15</i><i class="v" style="left:114.0px;top:225.0px">Raclette Courdavault</i><i class="v r" style="right:18.8px;top:225.0px">55.00</i><i class="v" style="left:21.2px;top:229.5px">2</i><i class="v" style="left:43.0px;top:229.5px">77</i><i class="v" style="left:75.2px;top:229.5px">2</i><i class="v" style="left:114.0px;top:229.5px">Original Frankfurter grüne Soße</i><i class="v r" style="right:18.8px;top:229.5px">13.00</i><s style="top:234.2px"></s><i class="b" style="left:114.0px;top:234.5px">Total</i><i class="v r" style="right:18.8px;top:234.5px">68.00</i><b class="bd" style="left:21.2px;top:246.3px">5</b><i class="b" style="left:31.2px;top:246.6px">Order</i><i class="b" style="left:75.2px;top:246.6px">Order date</i><i class="b" style="left:114.0px;top:246.6px">Ship date</i><i class="b" style="left:154.2px;top:246.6px">Weight</i><i class="b r" style="right:17.8px;top:246.6px">Order No</i><i class="v" style="left:75.2px;top:252.5px">4/16/2016</i><i class="v" style="left:114.0px;top:252.5px">4/24/2016</i><i class="v" style="left:154.2px;top:252.5px">40.42 kg</i><i class="v r" style="right:17.8px;top:252.5px">10,952</i><i class="b" style="left:21.2px;top:260.6px">Pos.</i><i class="b" style="left:43.0px;top:260.6px">Item No</i><i class="b" style="left:75.2px;top:260.6px">Quantity</i><i class="b" style="left:114.0px;top:260.6px">Product name</i><i class="b r" style="right:17.8px;top:260.6px">Price in $</i><u style="top:266.7px"></u><i class="v" style="left:21.2px;top:267.5px">1</i><i class="v" style="left:43.0px;top:267.5px">6</i><i class="v" style="left:75.2px;top:267.5px">16</i><i class="v" style="left:114.0px;top:267.5px">Grandma's Boysenberry Spread</i><i class="v r" style="right:18.8px;top:267.5px">25.00</i><i class="v" style="left:21.2px;top:271.9px">2</i><i class="v" style="left:43.0px;top:271.9px">28</i><i class="v" style="left:75.2px;top:271.9px">2</i><i class="v" style="left:114.0px;top:271.9px">Rössle Sauerkraut</i><i class="v r" style="right:18.8px;top:271.9px">45.60</i><s style="top:276.8px"></s><i class="b" style="left:114.0px;top:276.9px">Total</i><i class="v r" style="right:18.8px;top:276.9px">70.60</i><i class="f" style="left:16.0px;top:293.5px">Page 1 of 7</i><i class="f" style="left:16.0px;top:298.6px">Effective 8/17/2015 9:51 AM</i><svg class="tr" width="224" height="317" viewBox="0 0 224 317"><path d="M9.9 81.4h6.1v-5.6zM9.9 128.4h6.1v-5.6zM9.9 166.4h6.1v-5.6zM9.9 208.9h6.1v-5.6zM9.9 251.4h6.1v-5.6z"/></svg></div></div><div class="thb" style="left:9px;top:173px"><div class="pg" style="left:1px;top:1px;transform:scale(.389);transform-origin:0 0"><i class="h1" style="left:21.2px;top:28.8px">Order Overview</i><i class="h2" style="left:21.2px;top:40.4px">Customer orders</i><div class="wp"></div><div class="gb" style="height:17.2px"></div><i class="b" style="left:21.2px;top:58.2px">Company</i><i class="b" style="left:75.2px;top:58.2px">Address</i><i class="b r" style="right:17.8px;top:58.2px">Customer No</i><i class="v" style="left:21.2px;top:62.9px">Ana Trujillo Emparedados y</i><i class="v" style="left:21.2px;top:67.4px">helados</i><i class="v" style="left:75.2px;top:62.9px">Avda. de la Constitución 2222, 05021 México D.F.</i><i class="v r" style="right:17.8px;top:62.9px">ANATR</i><s class="k" style="top:86.2px"></s><i class="b w" style="left:114.0px;top:85.3px">Total of orders</i><i class="b w r" style="right:18.8px;top:85.3px">288.10</i><i class="f" style="left:16.0px;top:293.5px">Page 2 of 7</i><i class="f" style="left:16.0px;top:298.6px">Effective 8/17/2015 9:51 AM</i></div></div><div class="thb" style="left:9px;top:330px"><div class="pg" style="left:1px;top:1px;transform:scale(.389);transform-origin:0 0"><i class="h1" style="left:21.2px;top:28.8px">Order Overview</i><i class="h2" style="left:21.2px;top:40.4px">Customer orders</i><div class="wp"></div><div class="gb" style="height:17.2px"></div><i class="b" style="left:21.2px;top:58.2px">Company</i><i class="b" style="left:75.2px;top:58.2px">Address</i><i class="b r" style="right:17.8px;top:58.2px">Customer No</i><i class="v" style="left:21.2px;top:62.9px">Ana Trujillo Emparedados y</i><i class="v" style="left:21.2px;top:67.4px">helados</i><i class="v" style="left:75.2px;top:62.9px">Avda. de la Constitución 2222, 05021 México D.F.</i><i class="v r" style="right:17.8px;top:62.9px">ANATR</i><b class="bd" style="left:21.2px;top:80.2px">1</b><i class="b" style="left:31.2px;top:80.5px">Order</i><i class="b" style="left:75.2px;top:80.5px">Order date</i><i class="b" style="left:114.0px;top:80.5px">Ship date</i><i class="b" style="left:154.2px;top:80.5px">Weight</i><i class="b r" style="right:17.8px;top:80.5px">Order No</i><i class="v" style="left:75.2px;top:86.4px">10/18/2014</i><i class="v" style="left:114.0px;top:86.4px">10/24/2014</i><i class="v" style="left:154.2px;top:86.4px">1.61 kg</i><i class="v r" style="right:17.8px;top:86.4px">10,308</i><i class="b" style="left:21.2px;top:94.5px">Pos.</i><i class="b" style="left:43.0px;top:94.5px">Item No</i><i class="b" style="left:75.2px;top:94.5px">Quantity</i><i class="b" style="left:114.0px;top:94.5px">Product name</i><i class="b r" style="right:17.8px;top:94.5px">Price in $</i><u style="top:100.6px"></u><i class="v" style="left:21.2px;top:101.4px">1</i><i class="v" style="left:43.0px;top:101.4px">69</i><i class="v" style="left:75.2px;top:101.4px">1</i><i class="v" style="left:114.0px;top:101.4px">Gudbrandsdalsost</i><i class="v r" style="right:18.8px;top:101.4px">28.80</i><i class="v" style="left:21.2px;top:105.8px">2</i><i class="v" style="left:43.0px;top:105.8px">70</i><i class="v" style="left:75.2px;top:105.8px">5</i><i class="v" style="left:114.0px;top:105.8px">Outback Lager</i><i class="v r" style="right:18.8px;top:105.8px">12.00</i><s style="top:110.6px"></s><i class="b" style="left:114.0px;top:110.8px">Total</i><i class="v r" style="right:18.8px;top:110.8px">40.80</i><b class="bd" style="left:21.2px;top:122.7px">2</b><i class="b" style="left:31.2px;top:123.0px">Order</i><i class="b" style="left:75.2px;top:123.0px">Order date</i><i class="b" style="left:114.0px;top:123.0px">Ship date</i><i class="b" style="left:154.2px;top:123.0px">Weight</i><i class="b r" style="right:17.8px;top:123.0px">Order No</i><i class="v" style="left:75.2px;top:128.9px">9/8/2015</i><i class="v" style="left:114.0px;top:128.9px">9/14/2015</i><i class="v" style="left:154.2px;top:128.9px">43.90 kg</i><i class="v r" style="right:17.8px;top:128.9px">10,625</i><i class="b" style="left:21.2px;top:137.0px">Pos.</i><i class="b" style="left:43.0px;top:137.0px">Item No</i><i class="b" style="left:75.2px;top:137.0px">Quantity</i><i class="b" style="left:114.0px;top:137.0px">Product name</i><i class="b r" style="right:17.8px;top:137.0px">Price in $</i><u style="top:143.1px"></u><i class="v" style="left:21.2px;top:143.9px">1</i><i class="v" style="left:43.0px;top:143.9px">14</i><i class="v" style="left:75.2px;top:143.9px">3</i><i class="v" style="left:114.0px;top:143.9px">Tofu</i><i class="v r" style="right:18.8px;top:143.9px">23.25</i><i class="v" style="left:21.2px;top:148.3px">2</i><i class="v" style="left:43.0px;top:148.3px">42</i><i class="v" style="left:75.2px;top:148.3px">5</i><i class="v" style="left:114.0px;top:148.3px">Singaporean Hokkien Fried Mee</i><i class="v r" style="right:18.8px;top:148.3px">14.00</i><i class="v" style="left:21.2px;top:152.8px">3</i><i class="v" style="left:43.0px;top:152.8px">60</i><i class="v" style="left:75.2px;top:152.8px">10</i><i class="v" style="left:114.0px;top:152.8px">Camembert Pierrot</i><i class="v r" style="right:18.8px;top:152.8px">34.00</i><s style="top:157.6px"></s><i class="b" style="left:114.0px;top:157.8px">Total</i><i class="v r" style="right:18.8px;top:157.8px">71.25</i><b class="bd" style="left:21.2px;top:169.6px">3</b><i class="b" style="left:31.2px;top:169.9px">Order</i><i class="b" style="left:75.2px;top:169.9px">Order date</i><i class="b" style="left:114.0px;top:169.9px">Ship date</i><i class="b" style="left:154.2px;top:169.9px">Weight</i><i class="b r" style="right:17.8px;top:169.9px">Order No</i><i class="v" style="left:75.2px;top:175.8px">11/28/2015</i><i class="v" style="left:114.0px;top:175.8px">12/12/2015</i><i class="v" style="left:154.2px;top:175.8px">11.99 kg</i><i class="v r" style="right:17.8px;top:175.8px">10,759</i><i class="b" style="left:21.2px;top:183.9px">Pos.</i><i class="b" style="left:43.0px;top:183.9px">Item No</i><i class="b" style="left:75.2px;top:183.9px">Quantity</i><i class="b" style="left:114.0px;top:183.9px">Product name</i><i class="b r" style="right:17.8px;top:183.9px">Price in $</i><u style="top:190.0px"></u><i class="v" style="left:21.2px;top:190.8px">1</i><i class="v" style="left:43.0px;top:190.8px">32</i><i class="v" style="left:75.2px;top:190.8px">10</i><i class="v" style="left:114.0px;top:190.8px">Mascarpone Fabioli</i><i class="v r" style="right:18.8px;top:190.8px">32.00</i><s style="top:195.6px"></s><i class="b" style="left:114.0px;top:195.8px">Total</i><i class="v r" style="right:18.8px;top:195.8px">32.00</i><b class="bd" style="left:21.2px;top:207.7px">4</b><i class="b" style="left:31.2px;top:208.0px">Order</i><i class="b" style="left:75.2px;top:208.0px">Order date</i><i class="b" style="left:114.0px;top:208.0px">Ship date</i><i class="b" style="left:154.2px;top:208.0px">Weight</i><i class="b r" style="right:17.8px;top:208.0px">Order No</i><i class="v" style="left:75.2px;top:213.9px">4/3/2016</i><i class="v" style="left:114.0px;top:213.9px">4/11/2016</i><i class="v" style="left:154.2px;top:213.9px">39.92 kg</i><i class="v r" style="right:17.8px;top:213.9px">10,926</i><i class="b" style="left:21.2px;top:222.0px">Pos.</i><i class="b" style="left:43.0px;top:222.0px">Item No</i><i class="b" style="left:75.2px;top:222.0px">Quantity</i><i class="b" style="left:114.0px;top:222.0px">Product name</i><i class="b r" style="right:17.8px;top:222.0px">Price in $</i><u style="top:228.1px"></u><i class="v" style="left:21.2px;top:228.9px">1</i><i class="v" style="left:43.0px;top:228.9px">11</i><i class="v" style="left:75.2px;top:228.9px">2</i><i class="v" style="left:114.0px;top:228.9px">Queso Cabrales</i><i class="v r" style="right:18.8px;top:228.9px">21.00</i><i class="v" style="left:21.2px;top:233.3px">2</i><i class="v" style="left:43.0px;top:233.3px">13</i><i class="v" style="left:75.2px;top:233.3px">10</i><i class="v" style="left:114.0px;top:233.3px">Konbu</i><i class="v r" style="right:18.8px;top:233.3px">6.00</i><i class="v" style="left:21.2px;top:237.8px">3</i><i class="v" style="left:43.0px;top:237.8px">19</i><i class="v" style="left:75.2px;top:237.8px">7</i><i class="v" style="left:114.0px;top:237.8px">Teatime Chocolate Biscuits</i><i class="v r" style="right:18.8px;top:237.8px">9.20</i><i class="v" style="left:21.2px;top:242.2px">4</i><i class="v" style="left:43.0px;top:242.2px">72</i><i class="v" style="left:75.2px;top:242.2px">10</i><i class="v" style="left:114.0px;top:242.2px">Mozzarella di Giovanni</i><i class="v r" style="right:18.8px;top:242.2px">34.80</i><s style="top:247.0px"></s><i class="b" style="left:114.0px;top:247.2px">Total</i><i class="v r" style="right:18.8px;top:247.2px">71.00</i><s class="k" style="top:263.6px"></s><i class="b w" style="left:114.0px;top:262.7px">Total of orders</i><i class="b w r" style="right:18.8px;top:262.7px">215.05</i><i class="f" style="left:16.0px;top:293.5px">Page 3 of 7</i><i class="f" style="left:16.0px;top:298.6px">Effective 8/17/2015 9:51 AM</i><svg class="tr" width="224" height="317" viewBox="0 0 224 317"><path d="M9.9 85.3h6.1v-5.6zM9.9 127.8h6.1v-5.6zM9.9 174.7h6.1v-5.6zM9.9 212.8h6.1v-5.6z"/></svg></div></div><div class="thb" style="left:9px;top:487px"><div class="pg" style="left:1px;top:1px;transform:scale(.389);transform-origin:0 0"><i class="h1" style="left:21.2px;top:28.8px">Order Overview</i><i class="h2" style="left:21.2px;top:40.4px">Customer orders</i><div class="wp"></div><div class="gb" style="height:12.6px"></div><i class="b" style="left:21.2px;top:58.2px">Company</i><i class="b" style="left:75.2px;top:58.2px">Address</i><i class="b r" style="right:17.8px;top:58.2px">Customer No</i><i class="v" style="left:21.2px;top:62.9px">Antonio Moreno Taquería</i><i class="v" style="left:75.2px;top:62.9px">Mataderos 2312, 05023 México D.F.</i><i class="v r" style="right:17.8px;top:62.9px">ANTON</i><b class="bd" style="left:21.2px;top:76.3px">1</b><i class="b" style="left:31.2px;top:76.6px">Order</i><i class="b" style="left:75.2px;top:76.6px">Order date</i><i class="b" style="left:114.0px;top:76.6px">Ship date</i><i class="b" style="left:154.2px;top:76.6px">Weight</i><i class="b r" style="right:17.8px;top:76.6px">Order No</i><i class="v" style="left:75.2px;top:82.5px">11/28/2014</i><i class="v" style="left:114.0px;top:82.5px">1/2/2015</i><i class="v" style="left:154.2px;top:82.5px">22.00 kg</i><i class="v r" style="right:17.8px;top:82.5px">10,365</i><i class="b" style="left:21.2px;top:90.6px">Pos.</i><i class="b" style="left:43.0px;top:90.6px">Item No</i><i class="b" style="left:75.2px;top:90.6px">Quantity</i><i class="b" style="left:114.0px;top:90.6px">Product name</i><i class="b r" style="right:17.8px;top:90.6px">Price in $</i><u style="top:96.7px"></u><i class="v" style="left:21.2px;top:97.5px">1</i><i class="v" style="left:43.0px;top:97.5px">11</i><i class="v" style="left:75.2px;top:97.5px">24</i><i class="v" style="left:114.0px;top:97.5px">Queso Cabrales</i><i class="v r" style="right:18.8px;top:97.5px">16.80</i><s style="top:102.3px"></s><i class="b" style="left:114.0px;top:102.5px">Total</i><i class="v r" style="right:18.8px;top:102.5px">16.80</i><b class="bd" style="left:21.2px;top:114.4px">2</b><i class="b" style="left:31.2px;top:114.7px">Order</i><i class="b" style="left:75.2px;top:114.7px">Order date</i><i class="b" style="left:114.0px;top:114.7px">Ship date</i><i class="b" style="left:154.2px;top:114.7px">Weight</i><i class="b r" style="right:17.8px;top:114.7px">Order No</i><i class="v" style="left:75.2px;top:120.6px">5/15/2015</i><i class="v" style="left:114.0px;top:120.6px">5/22/2015</i><i class="v" style="left:154.2px;top:120.6px">47.45 kg</i><i class="v r" style="right:17.8px;top:120.6px">10,507</i><i class="b" style="left:21.2px;top:128.7px">Pos.</i><i class="b" style="left:43.0px;top:128.7px">Item No</i><i class="b" style="left:75.2px;top:128.7px">Quantity</i><i class="b" style="left:114.0px;top:128.7px">Product name</i><i class="b r" style="right:17.8px;top:128.7px">Price in $</i><u style="top:134.8px"></u><i class="v" style="left:21.2px;top:135.6px">1</i><i class="v" style="left:43.0px;top:135.6px">43</i><i class="v" style="left:75.2px;top:135.6px">15</i><i class="v" style="left:114.0px;top:135.6px">Ipoh Coffee</i><i class="v r" style="right:18.8px;top:135.6px">46.00</i><i class="v" style="left:21.2px;top:140.0px">2</i><i class="v" style="left:43.0px;top:140.0px">48</i><i class="v" style="left:75.2px;top:140.0px">15</i><i class="v" style="left:114.0px;top:140.0px">Chocolade</i><i class="v r" style="right:18.8px;top:140.0px">12.75</i><s style="top:144.8px"></s><i class="b" style="left:114.0px;top:145.0px">Total</i><i class="v r" style="right:18.8px;top:145.0px">58.75</i><b class="bd" style="left:21.2px;top:156.8px">3</b><i class="b" style="left:31.2px;top:157.2px">Order</i><i class="b" style="left:75.2px;top:157.2px">Order date</i><i class="b" style="left:114.0px;top:157.2px">Ship date</i><i class="b" style="left:154.2px;top:157.2px">Weight</i><i class="b r" style="right:17.8px;top:157.2px">Order No</i><i class="v" style="left:75.2px;top:163.1px">6/13/2015</i><i class="v" style="left:114.0px;top:163.1px">6/21/2015</i><i class="v" style="left:154.2px;top:163.1px">15.64 kg</i><i class="v r" style="right:17.8px;top:163.1px">10,535</i><i class="b" style="left:21.2px;top:171.2px">Pos.</i><i class="b" style="left:43.0px;top:171.2px">Item No</i><i class="b" style="left:75.2px;top:171.2px">Quantity</i><i class="b" style="left:114.0px;top:171.2px">Product name</i><i class="b r" style="right:17.8px;top:171.2px">Price in $</i><u style="top:177.2px"></u><i class="v" style="left:21.2px;top:178.1px">1</i><i class="v" style="left:43.0px;top:178.1px">11</i><i class="v" style="left:75.2px;top:178.1px">50</i><i class="v" style="left:114.0px;top:178.1px">Queso Cabrales</i><i class="v r" style="right:18.8px;top:178.1px">21.00</i><i class="v" style="left:21.2px;top:182.5px">2</i><i class="v" style="left:43.0px;top:182.5px">40</i><i class="v" style="left:75.2px;top:182.5px">10</i><i class="v" style="left:114.0px;top:182.5px">Boston Crab Meat</i><i class="v r" style="right:18.8px;top:182.5px">18.40</i><i class="v" style="left:21.2px;top:186.9px">3</i><i class="v" style="left:43.0px;top:186.9px">57</i><i class="v" style="left:75.2px;top:186.9px">5</i><i class="v" style="left:114.0px;top:186.9px">Ravioli Angelo</i><i class="v r" style="right:18.8px;top:186.9px">19.50</i><i class="v" style="left:21.2px;top:191.4px">4</i><i class="v" style="left:43.0px;top:191.4px">59</i><i class="v" style="left:75.2px;top:191.4px">15</i><i class="v" style="left:114.0px;top:191.4px">Raclette Courdavault</i><i class="v r" style="right:18.8px;top:191.4px">55.00</i><s style="top:196.2px"></s><i class="b" style="left:114.0px;top:196.4px">Total</i><i class="v r" style="right:18.8px;top:196.4px">113.90</i><b class="bd" style="left:21.2px;top:208.2px">4</b><i class="b" style="left:31.2px;top:208.5px">Order</i><i class="b" style="left:75.2px;top:208.5px">Order date</i><i class="b" style="left:114.0px;top:208.5px">Ship date</i><i class="b" style="left:154.2px;top:208.5px">Weight</i><i class="b r" style="right:17.8px;top:208.5px">Order No</i><i class="v" style="left:75.2px;top:214.4px">7/19/2015</i><i class="v" style="left:114.0px;top:214.4px">7/20/2015</i><i class="v" style="left:154.2px;top:214.4px">84.84 kg</i><i class="v r" style="right:17.8px;top:214.4px">10,573</i><i class="b" style="left:21.2px;top:222.5px">Pos.</i><i class="b" style="left:43.0px;top:222.5px">Item No</i><i class="b" style="left:75.2px;top:222.5px">Quantity</i><i class="b" style="left:114.0px;top:222.5px">Product name</i><i class="b r" style="right:17.8px;top:222.5px">Price in $</i><u style="top:228.6px"></u><i class="v" style="left:21.2px;top:229.4px">1</i><i class="v" style="left:43.0px;top:229.4px">17</i><i class="v" style="left:75.2px;top:229.4px">18</i><i class="v" style="left:114.0px;top:229.4px">Alice Mutton</i><i class="v r" style="right:18.8px;top:229.4px">39.00</i><i class="v" style="left:21.2px;top:233.9px">2</i><i class="v" style="left:43.0px;top:233.9px">34</i><i class="v" style="left:75.2px;top:233.9px">40</i><i class="v" style="left:114.0px;top:233.9px">Sasquatch Ale</i><i class="v r" style="right:18.8px;top:233.9px">14.00</i><i class="v" style="left:21.2px;top:238.3px">3</i><i class="v" style="left:43.0px;top:238.3px">53</i><i class="v" style="left:75.2px;top:238.3px">25</i><i class="v" style="left:114.0px;top:238.3px">Pâté chinois</i><i class="v r" style="right:18.8px;top:238.3px">32.80</i><s style="top:243.1px"></s><i class="b" style="left:114.0px;top:243.3px">Total</i><i class="v r" style="right:18.8px;top:243.3px">85.80</i><b class="bd" style="left:21.2px;top:255.2px">5</b><i class="b" style="left:31.2px;top:255.5px">Order</i><i class="b" style="left:75.2px;top:255.5px">Order date</i><i class="b" style="left:114.0px;top:255.5px">Ship date</i><i class="b" style="left:154.2px;top:255.5px">Weight</i><i class="b r" style="right:17.8px;top:255.5px">Order No</i><i class="v" style="left:75.2px;top:261.4px">10/22/2015</i><i class="v" style="left:114.0px;top:261.4px">10/27/2015</i><i class="v" style="left:154.2px;top:261.4px">4.03 kg</i><i class="v r" style="right:17.8px;top:261.4px">10,677</i><i class="b" style="left:21.2px;top:269.5px">Pos.</i><i class="b" style="left:43.0px;top:269.5px">Item No</i><i class="b" style="left:75.2px;top:269.5px">Quantity</i><i class="b" style="left:114.0px;top:269.5px">Product name</i><i class="b r" style="right:17.8px;top:269.5px">Price in $</i><u style="top:275.6px"></u><i class="v" style="left:21.2px;top:276.4px">1</i><i class="v" style="left:43.0px;top:276.4px">26</i><i class="v" style="left:75.2px;top:276.4px">30</i><i class="v" style="left:114.0px;top:276.4px">Gumbär Gummibärchen</i><i class="v r" style="right:18.8px;top:276.4px">31.23</i><i class="f" style="left:16.0px;top:293.5px">Page 4 of 7</i><i class="f" style="left:16.0px;top:298.6px">Effective 8/17/2015 9:51 AM</i><svg class="tr" width="224" height="317" viewBox="0 0 224 317"><path d="M9.9 81.4h6.1v-5.6zM9.9 119.5h6.1v-5.6zM9.9 161.9h6.1v-5.6zM9.9 213.3h6.1v-5.6zM9.9 260.3h6.1v-5.6z"/></svg></div></div><div class="thb" style="left:9px;top:644px"><div class="pg" style="left:1px;top:1px;transform:scale(.389);transform-origin:0 0"><i class="h1" style="left:21.2px;top:28.8px">Order Overview</i><i class="h2" style="left:21.2px;top:40.4px">Customer orders</i><div class="wp"></div><div class="gb" style="height:12.6px"></div><i class="b" style="left:21.2px;top:58.2px">Company</i><i class="b" style="left:75.2px;top:58.2px">Address</i><i class="b r" style="right:17.8px;top:58.2px">Customer No</i><i class="v" style="left:21.2px;top:62.9px">Antonio Moreno Taquería</i><i class="v" style="left:75.2px;top:62.9px">Mataderos 2312, 05023 México D.F.</i><i class="v r" style="right:17.8px;top:62.9px">ANTON</i><i class="b" style="left:21.2px;top:76.6px">Pos.</i><i class="b" style="left:43.0px;top:76.6px">Item No</i><i class="b" style="left:75.2px;top:76.6px">Quantity</i><i class="b" style="left:114.0px;top:76.6px">Product name</i><i class="b r" style="right:17.8px;top:76.6px">Price in $</i><u style="top:82.7px"></u><i class="v" style="left:21.2px;top:83.5px">2</i><i class="v" style="left:43.0px;top:83.5px">33</i><i class="v" style="left:75.2px;top:83.5px">8</i><i class="v" style="left:114.0px;top:83.5px">Geitost</i><i class="v r" style="right:18.8px;top:83.5px">2.50</i><s style="top:88.3px"></s><i class="b" style="left:114.0px;top:88.5px">Total</i><i class="v r" style="right:18.8px;top:88.5px">33.73</i><s class="k" style="top:104.9px"></s><i class="b w" style="left:114.0px;top:104.0px">Total of orders</i><i class="b w r" style="right:18.8px;top:104.0px">306.28</i><i class="f" style="left:16.0px;top:293.5px">Page 5 of 7</i><i class="f" style="left:16.0px;top:298.6px">Effective 8/17/2015 9:51 AM</i></div></div></div><div style="left:304px;top:843px;width:126px;height:25px;background:#fff;"></div><div style="left:413px;top:843px;width:16px;height:4px;background:#f0f0f0;"></div><div style="left:315.5px;top:847px;width:59px;height:19.5px;background:#f0f0f0;border:1px solid #a0a0a0;border-top:none;border-left-color:#e0e0e0;box-sizing:border-box;"></div><div style="left:304px;top:868.5px;width:674px;height:4.5px;background:#f7f7f7;"></div><div style="left:429px;top:868px;width:8px;height:1px;background:#8c8c8c;"></div><div style="left:304px;top:873px;width:674px;height:22px;background:#fff;"></div><div style="left:304px;top:873px;width:674px;height:1px;background:#a8a8a8;"></div><div style="left:531.5px;top:873px;width:108px;height:20px;background:#f3f4f6;border:1px solid #8e8e8e;border-top:1px solid #f3f4f6;box-sizing:border-box;"></div><div style="left:425px;top:876px;width:1px;height:16px;background:#8e8e8e;"></div><div style="left:844px;top:904.5px;width:83px;height:3.5px;background:#e7e7e7;border:1px solid #d6d6d6;box-sizing:border-box;"></div><div style="left:840.5px;top:916px;width:1px;height:3px;background:#b5b5b5;"></div><div style="left:881.5px;top:916px;width:1px;height:3px;background:#b5b5b5;"></div><div style="left:922.5px;top:916px;width:1px;height:3px;background:#b5b5b5;"></div><svg style="left:0;top:0" width="986" height="928" viewBox="0 0 986 928"><rect x="8.4" y="7.4" width="15.2" height="15.2" fill="#fff" stroke="#4d88c9" stroke-width=".9"/><rect x="31" y="9.5" width="1" height="12" fill="#838383"/><rect x="32" y="9.5" width="1" height="12" fill="#bdbdbd"/><rect x="125" y="9.5" width="1" height="12" fill="#838383"/><rect x="126" y="9.5" width="1" height="12" fill="#bdbdbd"/><path d="M42.2 9h13.5v13.7h-13.5z" fill="#8a50b2"/><rect x="44.6" y="9" width="9.2" height="5.6" fill="#a3a3a3"/><rect x="45.6" y="17.8" width="7.4" height="4.9" fill="#fff"/><rect x="47.4" y="19.8" width="2.2" height="2.9" fill="#8a50b2"/><g transform="translate(64 10)"><path d="M6 .8 L1 5.3 L6 9.8 M1.3 5.3 H8.5 C12 5.3 13.3 8 11.8 10.5 C11.2 11.6 10.3 12.3 9.3 12.6" fill="none" stroke="#8eaad6" stroke-width="2.1" stroke-linejoin="miter"/></g><g transform="translate(100 10)"><path d="M6 .8 L1 5.3 L6 9.8 M1.3 5.3 H8.5 C12 5.3 13.3 8 11.8 10.5 C11.2 11.6 10.3 12.3 9.3 12.6" fill="none" stroke="#8eaad6" stroke-width="2.1" transform="scale(-1 1)"/></g><rect x="107.5" y="13.6" width="7.6" height="1.4" fill="#111"/><path d="M107.5 16.3h7.6l-3.8 4.2z" fill="#111"/><rect x="890" y="12.6" width="8" height="2.4" fill="#111"/><path d="M916.3 8.2h9.2v6.2h-9.2z M916.3 8.9h9.2" fill="none" stroke="#111" stroke-width="1.3"/><rect x="915.7" y="7.5" width="10.4" height="2.2" fill="#111"/><path d="M953 7.5l8 8M961 7.5l-8 8" stroke="#fff" stroke-width="1.9" fill="none"/><path d="M941 44.5l4-4 4 4" stroke="#8a8a8a" stroke-width="1.8" fill="none"/><circle cx="967" cy="42" r="7" fill="#1b78cb"/><path d="M28.6 79.5V69.5C28.6 67.2 32.3 67.2 32.3 69.2V66.8C32.3 64.3 37.4 64.3 37.4 66.8V68C37.4 65.8 41.8 65.8 41.8 68V70C41.8 68 45.8 68 45.8 70.5V81C45.8 86.5 41 90.6 35.5 90.6C30 90.6 27 87.5 25 83C23.8 80.3 23.8 78 25 77.2C26.3 76.4 27.6 77.6 28.6 79.5z" fill="#fff" stroke="#7b7b7b" stroke-width="1.2"/><path d="M32.3 69V75.8M37.4 67V75.8M41.8 69V76.3" stroke="#8a8a8a" stroke-width=".9" fill="none"/><path d="M70.5 64.6H84.0L90.8 71.39999999999999V91.6H70.5z" fill="#fff" stroke="#727272" stroke-width="1"/><path d="M84.0 64.6V71.39999999999999H90.8" fill="none" stroke="#727272" stroke-width="1"/><path d="M82.2 88.4L88.5 83H91.6L87 87H96V89.9H87L91.6 93.8H88.5z" fill="#3d7bbd"/><path d="M115.3 64.6H128.79999999999998L135.6 71.39999999999999V91.6H115.3z" fill="#e9effb" stroke="#aabbdb" stroke-width="1"/><path d="M128.79999999999998 64.6V71.39999999999999H135.6" fill="none" stroke="#aabbdb" stroke-width="1"/><path d="M140.9 88.4L134.6 83H131.5L136.1 87H126.2V89.9H136.1L131.5 93.8H134.6z" fill="#9eaece"/><path d="M226 68.4h5.2l-2.6 2.8z" fill="#111"/><circle cx="157" cy="92" r="6.3" fill="#eef2fb" stroke="#a3b3d3" stroke-width="1.8"/><g transform="translate(157 92) scale(1 1)"><path d="M-4.2 0L-.6 -3.5H1.6L-1.2 -.95H4V.95H-1.2L1.6 3.5H-.6z" fill="#9eaece"/></g><circle cx="157" cy="114" r="6.3" fill="#eef2fb" stroke="#a3b3d3" stroke-width="1.8"/><g transform="translate(157 114) scale(-1 1)"><path d="M-4.2 0L-.6 -3.5H1.6L-1.2 -.95H4V.95H-1.2L1.6 3.5H-.6z" fill="#9eaece"/></g><rect x="254.3" y="64.3" width="19.5" height="27.2" fill="#fff" stroke="#555" stroke-width="1" stroke-dasharray="2.3 1.6"/><circle cx="271.8" cy="82.6" r="6.3" fill="#fff" stroke="#808080" stroke-width="1.6"/><circle cx="271.8" cy="82.6" r="7.6" fill="none" stroke="#dfe9f5" stroke-width="1" opacity=".8"/><path d="M276.4 87.3L282.2 93" stroke="#808080" stroke-width="2.6" stroke-linecap="round"/><path d="M311 63.4H324.5V84" fill="none" stroke="#a5a5a5" stroke-width="1" stroke-dasharray="1.6 1.6"/><path d="M296.3 63.4H309.4L315.7 69.7V89.8H296.3z" fill="#fff" stroke="#727272" stroke-width="1"/><path d="M309.4 63.4V69.7H315.7" fill="none" stroke="#727272" stroke-width="1"/><path d="M309.8 76.2H318.5L315.2 72.8H317.8L321.9 77.05L317.8 81.3H315.2L318.5 77.9H309.8z" fill="#3d7bbd"/><rect x="311.9" y="85" width="14.2" height="8.9" fill="#3d7bbd"/><rect x="341.3" y="64.3" width="20.5" height="27.3" fill="#fff" stroke="#727272" stroke-width="1"/><path d="M344 69.6H359M344 72.6H359M344 75.5H359M344 78.5H359M344 81.5H359M344 84.5H359M344 87.6H359" stroke="#8d8d8d" stroke-width=".8" fill="none"/><path d="M335.9 77.9L339.9 74V81.9zM367.2 77.9L363.1 74V81.9z" fill="#3d7bbd"/><circle cx="383.4" cy="68" r="5.5" fill="none" stroke="#7d7d7d" stroke-width="1.8"/><path d="M387.4 72.2L390.3 76.4" stroke="#7d7d7d" stroke-width="2.4" stroke-linecap="round"/><circle cx="383.4" cy="90.3" r="5.5" fill="none" stroke="#7d7d7d" stroke-width="1.8"/><path d="M387.4 94.5L390.3 98.7" stroke="#7d7d7d" stroke-width="2.4" stroke-linecap="round"/><circle cx="378.9" cy="74.9" r="4" fill="#f3f4f6"/><path d="M378.9 71.9v6M375.9 74.9h6" stroke="#4b9a7c" stroke-width="1.9" fill="none"/><rect x="375" y="94.5" width="8" height="5.5" fill="#f3f4f6"/><rect x="376" y="96.2" width="6.2" height="2.3" fill="#d8502b"/><rect x="376.2" y="107.2" width="15.6" height="1.5" fill="#595959"/><rect x="378.2" y="108.7" width="11.7" height="7.6" fill="#fff" stroke="#7a7a7a" stroke-width="1"/><path d="M384 116.5V121.2M379.6 121.4H388.4" stroke="#6a6a6a" stroke-width="1.2" fill="none"/><circle cx="382.4" cy="112.4" r="2.6" fill="#f0a030"/><path d="M382.4 112.4V109.8A2.6 2.6 0 0 1 385 112.4z" fill="#3d7bbd"/><path d="M382.4 112.4H379.8A2.6 2.6 0 0 1 382.4 109.8z" fill="#e0452b"/><path d="M386.3 110.7H388.6M386.3 112.5H388.6M386.3 114.2H388.6" stroke="#8a8a8a" stroke-width=".8"/><path d="M465.1 112.4h4.9l-2.45 2.6z" fill="#111"/><rect x="490.9" y="73.1" width="28.3" height="12.6" rx="3" fill="#828282"/><rect x="498" y="66.2" width="13.9" height="7.5" fill="#fff" stroke="#8a8a8a" stroke-width="1"/><rect x="497" y="73.1" width="16" height="4.8" fill="#3d7bbd"/><rect x="498" y="82.6" width="14" height="8.2" fill="#fff" stroke="#8a8a8a" stroke-width="1"/><path d="M500.8 85.7H506M500.8 87.7H506" stroke="#3d7bbd" stroke-width=".9"/><circle cx="514.7" cy="86.5" r="7.6" fill="#6ba78d"/><path d="M510.6 86.8L513.5 89.6L519 83.6" stroke="#fff" stroke-width="2.1" fill="none"/><path d="M516.4 115h4.8l-2.4 2.7z" fill="#111"/><path d="M536.6 64.6H550.2L557 71.39999999999999V91.5H536.6z" fill="#fff" stroke="#727272" stroke-width="1"/><path d="M550.2 64.6V71.39999999999999H557" fill="none" stroke="#727272" stroke-width="1"/><path d="M549.9 83.4C550.4 87.2 553.6 89.3 559.5 88.9" fill="none" stroke="#3d7bbd" stroke-width="3.1"/><path d="M555.4 83H559.2L564.3 88.4L559.2 93.8H555.4L560.4 88.4z" fill="#3d7bbd"/><path d="M545.2 115h4.9l-2.45 2.7z" fill="#111"/><rect x="572.3" y="75" width="16" height="7.6" rx="2.5" fill="#a2b2d2"/><rect x="575.6" y="71.2" width="9.4" height="4.6" fill="#e9effb" stroke="#a2b2d2" stroke-width="1"/><rect x="575.6" y="80.2" width="9.4" height="5.4" fill="#e9effb" stroke="#a2b2d2" stroke-width="1"/><rect x="576" y="103.2" width="11.8" height="8.3" fill="#fff" stroke="#4a4a4a" stroke-width="1"/><path d="M578.3 106.6H583M578.3 108.7H583" stroke="#777" stroke-width=".8"/><rect x="584.6" y="104.6" width="1.9" height="1.9" fill="#3d7bbd"/><path d="M572.3 106.5h1.8l-.9 1.2zM573 109.2h1.8l-.9 1.2z" fill="#444"/><path d="M686.8 76.4h5l-2.5 2.8z" fill="#111"/><path d="M706.1 72.1H708.8V74L709.6 75V84.7H703V78.5L705 76.5V74L706.1 73zM712.1 72.1H714.9V74L716 75L717.2 78.5V80.5H711V75L712.1 74zM709.4 76.3H711.2V79.6H709.4z" fill="#707070"/><rect x="704.2" y="79" width="1.1" height="4.6" fill="#f4f4f4"/><path d="M711.1 82.2H715.6L713.6 80H716.2L719.2 83.1L716.2 86.2H713.6L715.6 84H711.1z" fill="#3d7bbd"/><circle cx="781.8" cy="77.1" r="12" fill="#e7edf9" stroke="#a9b9da" stroke-width="2"/><rect x="776" y="71.2" width="11.8" height="11.8" fill="#99aacb"/><path d="M813.2 64.6H826.9000000000001L833.7 71.39999999999999V91.5H813.2z" fill="#fff" stroke="#727272" stroke-width="1"/><path d="M826.9000000000001 64.6V71.39999999999999H833.7" fill="none" stroke="#727272" stroke-width="1"/><rect x="816.6" y="74.9" width="14.3" height="13.3" rx="1.6" fill="#3d7bbd"/><path d="M837.2 115h4.9l-2.45 2.7z" fill="#111"/><rect x="872" y="64" width="28" height="26.6" rx="3" fill="#d7532f"/><path d="M874.4 70H882L886.4 75.2L890.8 70H898.4L890.6 78.1L898.4 86.2H890.8L886.4 81L882 86.2H874.4L882.2 78.1z" fill="#fff"/><path d="M281.2 152.4l7.2 7.2M288.4 152.4l-7.2 7.2" stroke="#111" stroke-width="2.1" fill="none"/><path d="M281.4 452.4l7.2 7.2M288.6 452.4l-7.2 7.2" stroke="#111" stroke-width="2.1" fill="none"/><rect x="22.7" y="175.2" width="8.4" height="2.4" fill="#b6b6b6"/><rect x="18.7" y="179.2" width="11.9" height="6.800000000000001" fill="none" stroke="#b6b6b6" stroke-width="1"/><path d="M22.8 179.2V186.5M26.799999999999997 179.2V186.5M18.2 181.63333333333333H31.1M18.2 184.06666666666666H31.1" stroke="#b6b6b6" stroke-width="1" fill="none"/><path d="M18.8 173.7v5M16.3 176.2h5M17.0 174.39999999999998l3.6 3.6M20.599999999999998 174.39999999999998l-3.6 3.6" stroke="#b6b6b6" stroke-width=".7" fill="none"/><rect x="49.0" y="174" width="8.9" height="2.4" fill="#b6b6b6"/><rect x="45.0" y="178" width="12.4" height="8.9" fill="none" stroke="#b6b6b6" stroke-width="1"/><path d="M49.266666666666666 178V187.4M53.43333333333334 178V187.4M44.5 181.13333333333333H57.9M44.5 184.26666666666668H57.9" stroke="#b6b6b6" stroke-width="1" fill="none"/><path d="M45.1 172.5v5M42.6 175h5M43.3 173.2l3.6 3.6M46.9 173.2l-3.6 3.6" stroke="#b6b6b6" stroke-width=".7" fill="none"/><path d="M43.6 178.5V187.4" stroke="#b6b6b6" stroke-width="1"/><rect x="78.5" y="173.3" width="13" height="14" fill="none" stroke="#b6b6b6" stroke-width="1.1"/><rect x="78" y="172.8" width="14" height="2.6" fill="#b6b6b6"/><circle cx="82" cy="179.6" r="1.1" fill="#b6b6b6"/><circle cx="82" cy="183.6" r="1.1" fill="none" stroke="#b6b6b6" stroke-width=".7"/><path d="M84.6 179.6H89.5M84.6 183.6H89.5" stroke="#b6b6b6" stroke-width="1.1"/><path d="M104.5 175.2C109 178.5 113 182.5 117.3 187M117.4 175.6C112.5 178.8 108.5 182.5 104.3 186.8" stroke="#b6b6b6" stroke-width="2" fill="none" stroke-linecap="round"/><path d="M132.2 173L139.6 183.6M141.4 173L134 183.6" stroke="#b6b6b6" stroke-width="1.8" fill="none"/><circle cx="132.6" cy="185" r="2.2" fill="none" stroke="#b6b6b6" stroke-width="1.2"/><circle cx="141" cy="185" r="2.2" fill="none" stroke="#b6b6b6" stroke-width="1.2"/><path d="M155.7 174.9H161L163.2 177V184.3H155.7z" fill="#f3f4f6" stroke="#b6b6b6" stroke-width="1"/><path d="M157.3 177.7H160.5M157.3 179.7H160.5M157.3 181.7H160.5" stroke="#b6b6b6" stroke-width=".9"/><path d="M161.7 177.9H167.6L169.8 180V187.2H161.7z" fill="#f3f4f6" stroke="#b6b6b6" stroke-width="1"/><path d="M163.5 181.3H168M163.5 183.2H168M163.5 185.1H168" stroke="#b6b6b6" stroke-width=".9"/><path d="M183.8 175.6H193.2V179M183.8 175.6V184.3H187" fill="none" stroke="#b6b6b6" stroke-width="1.6"/><rect x="186" y="173.6" width="5" height="3" rx="1" fill="none" stroke="#b6b6b6" stroke-width="1"/><path d="M187.8 179.9H192.3L194.5 182V186.9H187.8z" fill="#f3f4f6" stroke="#b6b6b6" stroke-width="1"/><path d="M189.5 183.6H192.6M189.5 185.2H192.6" stroke="#b6b6b6" stroke-width=".8"/><path d="M223.9 185.8V177M220.2 180L223.9 176.2L227.6 180" stroke="#b6b6b6" stroke-width="2" fill="none"/><path d="M249.8 175.4V184.2M246.1 181.2L249.8 185L253.5 181.2" stroke="#b6b6b6" stroke-width="2" fill="none"/><path d="M278.2 176.5V187.1H292.8V176.5H288" fill="none" stroke="#b6b6b6" stroke-width="1.1"/><path d="M278.2 178C278.5 174.5 281 173.5 283.3 174.6L284.6 176.5M285.2 173.6L284.8 176.8L281.8 176.4" fill="none" stroke="#b6b6b6" stroke-width="1"/><rect x="286" y="179" width="5.2" height="2.3" fill="none" stroke="#b6b6b6" stroke-width=".8"/><rect x="286" y="183" width="5.2" height="2.3" fill="none" stroke="#b6b6b6" stroke-width=".8"/><path d="M280.3 180.3H284M280.3 184.3H284" stroke="#b6b6b6" stroke-width="1"/><path d="M18.4 207.70000000000002H24.099999999999998V202.3z" fill="#3a3a3a"/><path d="M26 205.5H29" stroke="#7a7a7a" stroke-width="1" stroke-dasharray="1 1" fill="none"/><path d="M34.5 197.8H41.3L45 201.5V210.4H34.5z" fill="#fff" stroke="#555" stroke-width="1"/><path d="M41.3 197.8V201.5H45" fill="none" stroke="#555" stroke-width="1"/><path d="M39.5 213V268" stroke="#7a7a7a" stroke-width="1" stroke-dasharray="1 1" fill="none"/><path d="M40 223.5H50" stroke="#7a7a7a" stroke-width="1" stroke-dasharray="1 1" fill="none"/><path d="M40 241.5H50" stroke="#7a7a7a" stroke-width="1" stroke-dasharray="1 1" fill="none"/><path d="M40 259.5H50" stroke="#7a7a7a" stroke-width="1" stroke-dasharray="1 1" fill="none"/><rect x="54.5" y="220.4" width="7" height="4.8" fill="#fff" stroke="#3b79bd" stroke-width="1.1"/><circle cx="62.2" cy="226" r="3.9" fill="#dd4f2e"/><path d="M60.3 224.1l3.8 3.8M64.1 224.1l-3.8 3.8" stroke="#fff" stroke-width="1.2"/><path d="M37 279.9H42.7V274.5z" fill="#3a3a3a"/><path d="M45 277.5H48" stroke="#7a7a7a" stroke-width="1" stroke-dasharray="1 1" fill="none"/><path d="M55 273.2H61M55 275H61M55 276.8H61M55 278.6H61M55 280.4H61" stroke="#555" stroke-width=".7" fill="none"/><path d="M39.5 285V350" stroke="#7a7a7a" stroke-width="1" stroke-dasharray="1 1" fill="none"/><path d="M40 349.5H50" stroke="#7a7a7a" stroke-width="1" stroke-dasharray="1 1" fill="none"/><rect x="58" y="285" width="1" height="1" fill="#7a7a7a"/><path d="M56.3 297.7H62.0V292.3z" fill="#3a3a3a"/><path d="M66 295.5H70" stroke="#7a7a7a" stroke-width="1" stroke-dasharray="1 1" fill="none"/><rect x="71.6" y="288.7" width="10" height="9.8" fill="#fff" stroke="#8e8e8e" stroke-width="1"/><path d="M73.5 293.7L75.69999999999999 295.9L79.89999999999999 290.8" stroke="#3b79bd" stroke-width="1.7" fill="none"/><rect x="87.6" y="288.7" width="10.8" height="10.4" fill="#fff" stroke="#8a8a8a" stroke-width="1"/><rect x="87.1" y="288.2" width="11.8" height="2.3" fill="#6a6a6a"/><path d="M91.19999999999999 290.2V299.2M94.8 290.2V299.2M87.1 293.4H98.6M87.1 296.3H98.6" stroke="#9a9a9a" stroke-width=".9" fill="none"/><rect x="77" y="303" width="1" height="1" fill="#7a7a7a"/><path d="M75.3 315.7H81.0V310.3z" fill="#3a3a3a"/><path d="M85 313.5H89" stroke="#7a7a7a" stroke-width="1" stroke-dasharray="1 1" fill="none"/><rect x="90.6" y="306.7" width="10" height="9.8" fill="#fff" stroke="#8e8e8e" stroke-width="1"/><path d="M92.5 311.7L94.69999999999999 313.9L98.89999999999999 308.8" stroke="#3b79bd" stroke-width="1.7" fill="none"/><rect x="106.5" y="306.7" width="10.8" height="10.4" fill="#fff" stroke="#8a8a8a" stroke-width="1"/><rect x="106" y="306.2" width="11.8" height="2.3" fill="#6a6a6a"/><path d="M110.1 308.2V317.2M113.7 308.2V317.2M106 311.4H117.5M106 314.3H117.5" stroke="#9a9a9a" stroke-width=".9" fill="none"/><path d="M96.5 321V331" stroke="#7a7a7a" stroke-width="1" stroke-dasharray="1 1" fill="none"/><path d="M97 331.5H107" stroke="#7a7a7a" stroke-width="1" stroke-dasharray="1 1" fill="none"/><rect x="109.5" y="324.7" width="10" height="9.8" fill="#fff" stroke="#8e8e8e" stroke-width="1"/><path d="M111.4 329.7L113.6 331.9L117.8 326.8" stroke="#3b79bd" stroke-width="1.7" fill="none"/><rect x="125.6" y="324.7" width="10.8" height="10.4" fill="#fff" stroke="#8a8a8a" stroke-width="1"/><rect x="125.1" y="324.2" width="11.8" height="2.3" fill="#6a6a6a"/><path d="M129.2 326.2V335.2M132.79999999999998 326.2V335.2M125.1 329.4H136.6M125.1 332.3H136.6" stroke="#9a9a9a" stroke-width=".9" fill="none"/><rect x="12.4" y="470.5" width="6" height="6.2" fill="none" stroke="#7f7f7f" stroke-width="1"/><path d="M13.9 473.6h3M15.4 472.1v3" stroke="#111" stroke-width="1.1"/><path d="M20 472.5h4" stroke="#111" stroke-width="1.1"/><rect x="12.4" y="478.5" width="6" height="6.2" fill="none" stroke="#7f7f7f" stroke-width="1"/><path d="M13.9 481.6h3M15.4 480.1v3" stroke="#111" stroke-width="1.1"/><path d="M20 482.5h4" stroke="#111" stroke-width="1.1"/><path d="M15.4 476.7v1.8" stroke="#7f7f7f" stroke-width="1"/><path d="M20 474.5h6M20 476.3h6M20 478.1h6M20 480h6M20 484.4h6" stroke="#9a9a9a" stroke-width=".9" stroke-dasharray="2.4 .9"/><path d="M35 476.6h6.6" stroke="#111" stroke-width=".9"/><path d="M45.5 470V473.4" stroke="#00008b" stroke-width="1.1" stroke-dasharray="1 1.2"/><path d="M45.5 474.6V481" stroke="#00008b" stroke-width="1.2"/><path d="M42.8 480.2H48.2L45.5 485.2z" fill="#00008b"/><path d="M259.8 476.8l3.6 4 3.6-4" stroke="#555" stroke-width="1.7" fill="none"/><circle cx="285" cy="477.6" r="7" fill="#3a74b4"/><circle cx="285" cy="477.6" r="7" fill="none" stroke="#9cbbe0" stroke-width=".8"/><rect x="284" y="476.3" width="2.1" height="5.6" fill="#fff"/><circle cx="285" cy="474" r="1.25" fill="#fff"/><path d="M16.3 503.9H22.0V498.5z" fill="#3a3a3a"/><path d="M17.5 648.2V656.2L21.8 652.2z" fill="#fff" stroke="#8a8a8a" stroke-width="1"/><path d="M17.5 667.2V675.2L21.8 671.2z" fill="#fff" stroke="#8a8a8a" stroke-width="1"/><path d="M417 157l4-4 4 4" stroke="#505050" stroke-width="1.9" fill="none"/><path d="M416.5 832.5l3.7 3.8 3.7-3.8" stroke="#505050" stroke-width="1.9" fill="none"/><path d="M964.6 157l4-4 4 4" stroke="#505050" stroke-width="1.9" fill="none"/><path d="M964.6 858.5l3.8 3.9 3.8-3.9" stroke="#505050" stroke-width="1.9" fill="none"/><path d="M322 850.4H329V859.2H322" fill="#fff" stroke="#111" stroke-width="1"/><path d="M323 852.5H327M323 854.5H327M323 856.5H327" stroke="#111" stroke-width=".9"/><path d="M322 866V863.8H329V866" fill="#fff" stroke="#111" stroke-width="1"/><path d="M376 850.5H381M378 853H383M378 855.5H382M378 858H383M378 860.5H382M376 863H381M376 850.5V863" stroke="#111" stroke-width=".9" fill="none"/><rect x="343.8" y="875.9" width="8.6" height="10.2" rx="1" fill="#fff" stroke="#8da3c4" stroke-width="1"/><path d="M345.5 878.5h5M345.5 880.5h5M345.5 882.5h5" stroke="#8da3c4" stroke-width=".9" stroke-dasharray="1 1"/><rect x="349.8" y="879.6" width="8.6" height="10.6" rx="1" fill="#fff" stroke="#8da3c4" stroke-width="1"/><path d="M351.5 882.5h5M351.5 884.5h5M351.5 886.5h5M351.5 888.3h5" stroke="#8da3c4" stroke-width=".9" stroke-dasharray="1 1"/><rect x="428.5" y="875.5" width="15" height="15" fill="none" stroke="#222" stroke-width="1" stroke-dasharray="1 1" stroke-dashoffset=".5"/><rect x="430.3" y="877.3" width="7" height="6" fill="#9aa7b8" stroke="#7d8796" stroke-width=".6"/><rect x="434.5" y="880" width="7.5" height="5" fill="#c3cad4" stroke="#8c96a5" stroke-width=".6"/><rect x="432.3" y="885.6" width="9" height="3" fill="#3a3a3a"/><rect x="554.5" y="875.5" width="15" height="15" fill="none" stroke="#222" stroke-width="1" stroke-dasharray="1 1" stroke-dashoffset=".5"/><rect x="556.3" y="877.3" width="5.6" height="6.6" fill="#e9c861" stroke="#a88a2e" stroke-width=".7"/><rect x="562" y="878.2" width="6" height="6.8" fill="#f0d680" stroke="#a88a2e" stroke-width=".7"/><path d="M563.3 880.3h3.4M563.3 882.3h3.4" stroke="#a88a2e" stroke-width=".7"/><rect x="558.5" y="885.8" width="9.5" height="3" fill="#3a3a3a"/><circle cx="813" cy="906.3" r="6.6" fill="#f0f0f0" stroke="#3b73b9" stroke-width="1.7"/><path d="M809.4 906.3h7.2" stroke="#3b73b9" stroke-width="1.8"/><circle cx="948.6" cy="906.3" r="6.6" fill="#f0f0f0" stroke="#3b73b9" stroke-width="1.7"/><path d="M945.0 906.3h7.2" stroke="#3b73b9" stroke-width="1.8"/><path d="M948.6 902.7v7.2" stroke="#3b73b9" stroke-width="1.8"/><path d="M836.2 899.2H843.6V909.8L839.9 913.3L836.2 909.8z" fill="#ececec" stroke="#a2a2a2" stroke-width="1"/><path d="M975.5 917.5h1.3v1.3h-1.3zM975.5 914.9h1.3v1.3h-1.3zM975.5 912.3h1.3v1.3h-1.3zM972.9 917.5h1.3v1.3h-1.3zM972.9 914.9h1.3v1.3h-1.3zM970.3 917.5h1.3v1.3h-1.3z" fill="#bdbdbd"/></svg><span class="t" style="left:131.50px;top:8.20px;font-size:14.5px;color:#3a3a3a;letter-spacing:0.237px;">Designer - C:\Program Files (x86)\combit\LL21\Demo Application\Sub reports and relations with expandable r...</span><span class="t" style="left:27.60px;top:36.70px;font-size:11.5px;color:#fff;font-weight:700;letter-spacing:-0.453px;">File</span><span class="t" style="left:77.50px;top:36.70px;font-size:11.5px;color:#222;letter-spacing:-0.344px;">Preview</span><span class="t" style="left:20.70px;top:97.60px;font-size:10.5px;color:#333;letter-spacing:0.453px;">Move</span><span class="t" style="left:58.60px;top:97.60px;font-size:10.5px;color:#333;letter-spacing:0.143px;">Previous</span><span class="t" style="left:67.60px;top:110.50px;font-size:10.5px;color:#333;letter-spacing:0.067px;">Page</span><span class="t" style="left:113.50px;top:97.60px;font-size:10.5px;color:#9a9a9a;letter-spacing:0.227px;">Next</span><span class="t" style="left:112.70px;top:110.50px;font-size:10.5px;color:#9a9a9a;letter-spacing:0.017px;">Page</span><span class="t" style="left:147.60px;top:63.60px;font-size:10.5px;color:#111;letter-spacing:-0.091px;">Page:</span><span class="t" style="left:185.00px;top:63.60px;font-size:10.5px;color:#444;">7</span><span class="t" style="left:168.70px;top:85.90px;font-size:10.5px;color:#9a9a9a;letter-spacing:0.238px;">Previous File</span><span class="t" style="left:168.70px;top:107.60px;font-size:10.5px;color:#9a9a9a;letter-spacing:0.229px;">Next File</span><span class="t" style="left:97.70px;top:130.60px;font-size:10.5px;color:#9a9a9a;letter-spacing:0.508px;">Navigation</span><span class="t" style="left:252.50px;top:97.60px;font-size:10.5px;color:#333;letter-spacing:0.135px;">Select</span><span class="t" style="left:256.40px;top:110.50px;font-size:10.5px;color:#333;letter-spacing:0.053px;">Area</span><span class="t" style="left:300.60px;top:97.60px;font-size:10.5px;color:#333;letter-spacing:0.156px;">100</span><span class="t" style="left:305.00px;top:110.50px;font-size:10.5px;color:#333;letter-spacing:-0.344px;">%</span><span class="t" style="left:339.70px;top:97.60px;font-size:10.5px;color:#333;letter-spacing:-0.008px;">Page</span><span class="t" style="left:335.30px;top:110.50px;font-size:10.5px;color:#333;letter-spacing:0.911px;">Width</span><span class="t" style="left:395.00px;top:63.80px;font-size:10.5px;color:#333;letter-spacing:0.426px;">Zoom In</span><span class="t" style="left:395.00px;top:85.80px;font-size:10.5px;color:#333;letter-spacing:0.664px;">Zoom Out</span><span class="t" style="left:395.60px;top:107.60px;font-size:10.5px;color:#333;letter-spacing:0.419px;">Presentation</span><span class="t" style="left:346.50px;top:130.60px;font-size:10.5px;color:#9a9a9a;letter-spacing:0.289px;">Zoom</span><span class="t" style="left:491.80px;top:97.60px;font-size:10.5px;color:#333;letter-spacing:0.291px;">Quick</span><span class="t" style="left:489.80px;top:110.50px;font-size:10.5px;color:#333;letter-spacing:0.281px;">Print</span><span class="t" style="left:531.70px;top:97.60px;font-size:10.5px;color:#333;letter-spacing:0.323px;">Export</span><span class="t" style="left:519.70px;top:130.60px;font-size:10.5px;color:#9a9a9a;letter-spacing:0.978px;">Output</span><span class="t" style="left:722.60px;top:72.00px;font-size:10.5px;color:#333;letter-spacing:0.391px;">Find</span><span class="t" style="left:625.60px;top:100.80px;font-size:10.5px;color:#333;letter-spacing:0.277px;">Match Case</span><span class="t" style="left:664.80px;top:130.60px;font-size:10.5px;color:#9a9a9a;letter-spacing:0.266px;">Find</span><span class="t" style="left:763.90px;top:97.60px;font-size:10.5px;color:#9a9a9a;">Cancel</span><span class="t" style="left:811.70px;top:97.60px;font-size:10.5px;color:#333;letter-spacing:0.166px;">Limit</span><span class="t" style="left:804.50px;top:110.50px;font-size:10.5px;color:#333;letter-spacing:-0.216px;">Pages</span><span class="t" style="left:780.80px;top:130.60px;font-size:10.5px;color:#9a9a9a;letter-spacing:0.387px;">Creation</span><span class="t" style="left:858.50px;top:97.60px;font-size:10.5px;color:#333;letter-spacing:0.304px;">Close Print</span><span class="t" style="left:866.20px;top:110.50px;font-size:10.5px;color:#333;letter-spacing:0.163px;">Preview</span><span class="t" style="left:313.40px;top:86.10px;font-size:6.8px;color:#fff;font-weight:700;letter-spacing:-0.015px;">100</span><span class="t" style="left:12.10px;top:11.40px;font-size:9px;color:#3c3c3c;font-weight:700;transform:scale(.84,1.2);transform-origin:0 100%;-webkit-text-stroke:.3px #3c3c3c;">L</span><span class="t" style="left:16.70px;top:11.40px;font-size:9px;color:#8a8a8a;font-weight:700;transform:scale(.84,1.2);transform-origin:0 100%;-webkit-text-stroke:.3px #8a8a8a;">L</span><span class="t" style="left:35.30px;top:468.20px;font-size:8.3px;color:#111;font-weight:700;letter-spacing:0.200px;">A</span><span class="t" style="left:35.80px;top:476.70px;font-size:8.3px;color:#111;font-weight:700;letter-spacing:0.522px;">Z</span><span class="t" style="left:53.60px;top:472.20px;font-size:9.2px;color:#111;font-weight:700;font-family:"Liberation Mono",monospace;">[+]</span><span class="t" style="left:819.00px;top:75.20px;font-size:12px;color:#fff;font-weight:700;transform:scaleX(1.42);transform-origin:0 0;">#</span><span class="t" style="left:963.60px;top:35.00px;font-size:13.5px;color:#fff;font-weight:700;">?</span><span class="t" style="left:11.60px;top:150.80px;font-size:11.5px;color:#111;letter-spacing:-0.071px;">Objects</span><span class="t" style="left:52.00px;top:197.50px;font-size:11.5px;color:#111;letter-spacing:0.172px;">Project</span><span class="t" style="left:71.60px;top:215.50px;font-size:11.5px;color:#111;letter-spacing:0.062px;">Background</span><span class="t" style="left:71.60px;top:233.50px;font-size:11.5px;color:#111;letter-spacing:0.014px;">Header</span><span class="t" style="left:71.60px;top:251.50px;font-size:11.5px;color:#111;letter-spacing:-0.102px;">Header 2</span><span class="t" style="left:71.60px;top:269.50px;font-size:11.5px;color:#111;letter-spacing:0.058px;">Report Container</span><span class="t" style="left:106.00px;top:287.50px;font-size:11.5px;color:#111;letter-spacing:0.251px;">Table: Customers [CustomerID [+]]</span><span class="t" style="left:125.00px;top:305.50px;font-size:11.5px;color:#111;">Table: Orders</span><span class="t" style="left:144.00px;top:323.50px;font-size:11.5px;color:#111;letter-spacing:0.029px;">Table: Order Details</span><span class="t" style="left:71.60px;top:341.50px;font-size:11.5px;color:#111;letter-spacing:0.261px;">Print info</span><span class="t" style="left:54.00px;top:233.50px;font-size:11.5px;color:#444;letter-spacing:0.528px;">A</span><span class="t" style="left:54.00px;top:251.50px;font-size:11.5px;color:#444;letter-spacing:0.528px;">A</span><span class="t" style="left:54.00px;top:341.50px;font-size:11.5px;color:#444;letter-spacing:0.528px;">A</span><span class="t" style="left:28.60px;top:419.10px;font-size:11.5px;color:#111;">Objects</span><span class="t" style="left:80.50px;top:419.10px;font-size:11.5px;color:#777;letter-spacing:-0.372px;">Layers</span><span class="t" style="left:124.00px;top:419.10px;font-size:11.5px;color:#777;letter-spacing:-0.029px;">Preview</span><span class="t" style="left:11.60px;top:450.80px;font-size:11.5px;color:#111;letter-spacing:-0.042px;">Properties</span><span class="t" style="left:31.00px;top:494.90px;font-size:11.5px;color:#111;font-weight:700;letter-spacing:0.038px;">General Settings</span><span class="t" style="left:31.40px;top:513.00px;font-size:11.5px;color:#111;letter-spacing:0.141px;">Project Description</span><span class="t" style="left:163.80px;top:513.00px;font-size:11.5px;color:#111;letter-spacing:0.025px;">Sub reports and relatio...</span><span class="t" style="left:31.40px;top:532.00px;font-size:11.5px;color:#111;letter-spacing:0.123px;">Active Design Layout</span><span class="t" style="left:31.40px;top:551.00px;font-size:11.5px;color:#111;letter-spacing:0.055px;">Number of Issues</span><span class="t" style="left:163.80px;top:551.00px;font-size:11.5px;color:#111;">1</span><span class="t" style="left:31.40px;top:570.00px;font-size:11.5px;color:#111;letter-spacing:0.054px;">Embed Drilldown Rep...</span><span class="t" style="left:163.80px;top:570.00px;font-size:11.5px;color:#111;letter-spacing:0.148px;">No</span><span class="t" style="left:31.40px;top:588.60px;font-size:11.5px;color:#111;letter-spacing:0.357px;">Minimum Page Count</span><span class="t" style="left:163.80px;top:588.60px;font-size:11.5px;color:#111;">1</span><span class="t" style="left:31.40px;top:607.60px;font-size:11.5px;color:#111;letter-spacing:-0.091px;">Design Scheme</span><span class="t" style="left:31.40px;top:626.60px;font-size:11.5px;color:#111;letter-spacing:0.084px;">Transition Effect for Sli...</span><span class="t" style="left:255.80px;top:608.60px;font-size:11.5px;color:#111;letter-spacing:0.081px;">com...</span><span class="t" style="left:30.60px;top:646.60px;font-size:11.5px;color:#111;font-weight:700;letter-spacing:0.184px;">Mail Parameter</span><span class="t" style="left:30.60px;top:665.60px;font-size:11.5px;color:#111;font-weight:700;letter-spacing:0.086px;">Fax Parameter</span><span class="t" style="left:10.00px;top:834.80px;font-size:11.5px;color:#111;font-weight:700;letter-spacing:0.038px;">General Settings</span><span class="t" style="left:29.00px;top:900.80px;font-size:12px;color:#111;letter-spacing:-0.593px;">8.958, 29.622</span><span class="t" style="left:125.00px;top:900.80px;font-size:12px;color:#111;letter-spacing:-0.393px;">Select</span><span class="t" style="left:257.40px;top:900.80px;font-size:12px;color:#111;letter-spacing:0.078px;">-nothing selected-</span><span class="t" style="left:761.80px;top:900.80px;font-size:12px;color:#111;letter-spacing:-0.610px;">47%</span><span class="t" style="left:339.50px;top:851.00px;font-size:11.5px;color:#111;letter-spacing:-0.422px;">Pages</span><span class="t" style="left:394.30px;top:851.00px;font-size:11.5px;color:#777;letter-spacing:-0.215px;">Direc...</span><span class="t" style="left:363.00px;top:876.90px;font-size:11.5px;color:#777;letter-spacing:0.178px;">Layout</span><span class="t" style="left:448.40px;top:876.90px;font-size:11.5px;color:#777;letter-spacing:0.070px;">Layout Preview</span><span class="t" style="left:574.20px;top:876.90px;font-size:11.5px;color:#111;letter-spacing:-0.015px;">Preview</span></body></html>
